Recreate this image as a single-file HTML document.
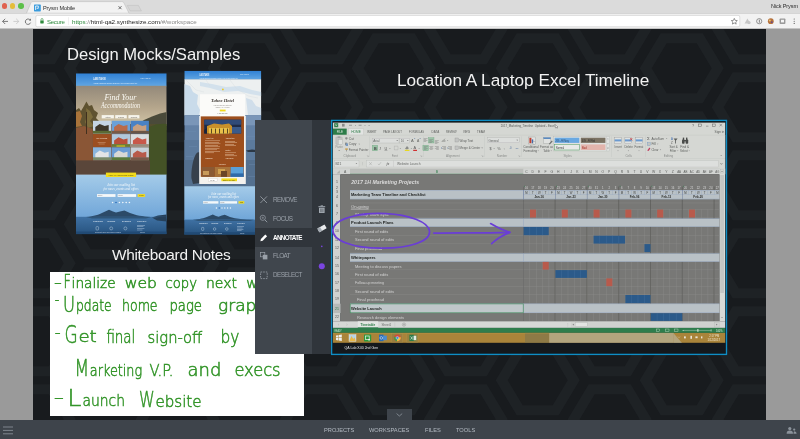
<!DOCTYPE html>
<html><head><meta charset="utf-8"><title>Prysm Mobile</title>
<style>
*{margin:0;padding:0;box-sizing:border-box}
html,body{width:800px;height:439px;overflow:hidden;background:#9a9a9a;font-family:"Liberation Sans",sans-serif}
.a{position:absolute}
#stage{position:absolute;left:0;top:0;width:800px;height:439px;overflow:hidden}
.t{position:absolute;white-space:nowrap;line-height:1;will-change:transform}
svg{will-change:transform}
</style></head><body><div id="stage">

<div class="a" id="ws" style="left:33px;top:29px;width:733px;height:391px;background:#181b1e;overflow:hidden">
<svg class="a" style="left:0;top:0" width="733" height="391" viewBox="33 29 733 391"><path fill="#1e2225" fill-rule="evenodd" d="M3.7 -9.8 L-17.3 25.2 L-59.3 25.2 L-80.3 -9.8 L-59.3 -44.8 L-17.3 -44.8 Z M-8.3 -9.8 L-23.3 15.2 L-53.3 15.2 L-68.3 -9.8 L-53.3 -34.8 L-23.3 -34.8 Z M3.7 68.2 L-17.3 103.2 L-59.3 103.2 L-80.3 68.2 L-59.3 33.2 L-17.3 33.2 Z M-8.3 68.2 L-23.3 93.2 L-53.3 93.2 L-68.3 68.2 L-53.3 43.2 L-23.3 43.2 Z M3.7 146.2 L-17.3 181.2 L-59.3 181.2 L-80.3 146.2 L-59.3 111.2 L-17.3 111.2 Z M-8.3 146.2 L-23.3 171.2 L-53.3 171.2 L-68.3 146.2 L-53.3 121.2 L-23.3 121.2 Z M3.7 224.2 L-17.3 259.2 L-59.3 259.2 L-80.3 224.2 L-59.3 189.2 L-17.3 189.2 Z M-8.3 224.2 L-23.3 249.2 L-53.3 249.2 L-68.3 224.2 L-53.3 199.2 L-23.3 199.2 Z M3.7 302.2 L-17.3 337.2 L-59.3 337.2 L-80.3 302.2 L-59.3 267.2 L-17.3 267.2 Z M-8.3 302.2 L-23.3 327.2 L-53.3 327.2 L-68.3 302.2 L-53.3 277.2 L-23.3 277.2 Z M3.7 380.2 L-17.3 415.2 L-59.3 415.2 L-80.3 380.2 L-59.3 345.2 L-17.3 345.2 Z M-8.3 380.2 L-23.3 405.2 L-53.3 405.2 L-68.3 380.2 L-53.3 355.2 L-23.3 355.2 Z M3.7 458.2 L-17.3 493.2 L-59.3 493.2 L-80.3 458.2 L-59.3 423.2 L-17.3 423.2 Z M-8.3 458.2 L-23.3 483.2 L-53.3 483.2 L-68.3 458.2 L-53.3 433.2 L-23.3 433.2 Z M75.7 -48.8 L54.7 -13.8 L12.7 -13.8 L-8.3 -48.8 L12.7 -83.8 L54.7 -83.8 Z M63.7 -48.8 L48.7 -23.8 L18.7 -23.8 L3.7 -48.8 L18.7 -73.8 L48.7 -73.8 Z M75.7 29.2 L54.7 64.2 L12.7 64.2 L-8.3 29.2 L12.7 -5.8 L54.7 -5.8 Z M63.7 29.2 L48.7 54.2 L18.7 54.2 L3.7 29.2 L18.7 4.2 L48.7 4.2 Z M75.7 107.2 L54.7 142.2 L12.7 142.2 L-8.3 107.2 L12.7 72.2 L54.7 72.2 Z M63.7 107.2 L48.7 132.2 L18.7 132.2 L3.7 107.2 L18.7 82.2 L48.7 82.2 Z M75.7 185.2 L54.7 220.2 L12.7 220.2 L-8.3 185.2 L12.7 150.2 L54.7 150.2 Z M63.7 185.2 L48.7 210.2 L18.7 210.2 L3.7 185.2 L18.7 160.2 L48.7 160.2 Z M75.7 263.2 L54.7 298.2 L12.7 298.2 L-8.3 263.2 L12.7 228.2 L54.7 228.2 Z M63.7 263.2 L48.7 288.2 L18.7 288.2 L3.7 263.2 L18.7 238.2 L48.7 238.2 Z M75.7 341.2 L54.7 376.2 L12.7 376.2 L-8.3 341.2 L12.7 306.2 L54.7 306.2 Z M63.7 341.2 L48.7 366.2 L18.7 366.2 L3.7 341.2 L18.7 316.2 L48.7 316.2 Z M75.7 419.2 L54.7 454.2 L12.7 454.2 L-8.3 419.2 L12.7 384.2 L54.7 384.2 Z M63.7 419.2 L48.7 444.2 L18.7 444.2 L3.7 419.2 L18.7 394.2 L48.7 394.2 Z M147.7 -9.8 L126.7 25.2 L84.7 25.2 L63.7 -9.8 L84.7 -44.8 L126.7 -44.8 Z M135.7 -9.8 L120.7 15.2 L90.7 15.2 L75.7 -9.8 L90.7 -34.8 L120.7 -34.8 Z M147.7 68.2 L126.7 103.2 L84.7 103.2 L63.7 68.2 L84.7 33.2 L126.7 33.2 Z M135.7 68.2 L120.7 93.2 L90.7 93.2 L75.7 68.2 L90.7 43.2 L120.7 43.2 Z M147.7 146.2 L126.7 181.2 L84.7 181.2 L63.7 146.2 L84.7 111.2 L126.7 111.2 Z M135.7 146.2 L120.7 171.2 L90.7 171.2 L75.7 146.2 L90.7 121.2 L120.7 121.2 Z M147.7 224.2 L126.7 259.2 L84.7 259.2 L63.7 224.2 L84.7 189.2 L126.7 189.2 Z M135.7 224.2 L120.7 249.2 L90.7 249.2 L75.7 224.2 L90.7 199.2 L120.7 199.2 Z M147.7 302.2 L126.7 337.2 L84.7 337.2 L63.7 302.2 L84.7 267.2 L126.7 267.2 Z M135.7 302.2 L120.7 327.2 L90.7 327.2 L75.7 302.2 L90.7 277.2 L120.7 277.2 Z M147.7 380.2 L126.7 415.2 L84.7 415.2 L63.7 380.2 L84.7 345.2 L126.7 345.2 Z M135.7 380.2 L120.7 405.2 L90.7 405.2 L75.7 380.2 L90.7 355.2 L120.7 355.2 Z M147.7 458.2 L126.7 493.2 L84.7 493.2 L63.7 458.2 L84.7 423.2 L126.7 423.2 Z M135.7 458.2 L120.7 483.2 L90.7 483.2 L75.7 458.2 L90.7 433.2 L120.7 433.2 Z M219.7 -48.8 L198.7 -13.8 L156.7 -13.8 L135.7 -48.8 L156.7 -83.8 L198.7 -83.8 Z M207.7 -48.8 L192.7 -23.8 L162.7 -23.8 L147.7 -48.8 L162.7 -73.8 L192.7 -73.8 Z M219.7 29.2 L198.7 64.2 L156.7 64.2 L135.7 29.2 L156.7 -5.8 L198.7 -5.8 Z M207.7 29.2 L192.7 54.2 L162.7 54.2 L147.7 29.2 L162.7 4.2 L192.7 4.2 Z M219.7 107.2 L198.7 142.2 L156.7 142.2 L135.7 107.2 L156.7 72.2 L198.7 72.2 Z M207.7 107.2 L192.7 132.2 L162.7 132.2 L147.7 107.2 L162.7 82.2 L192.7 82.2 Z M219.7 185.2 L198.7 220.2 L156.7 220.2 L135.7 185.2 L156.7 150.2 L198.7 150.2 Z M207.7 185.2 L192.7 210.2 L162.7 210.2 L147.7 185.2 L162.7 160.2 L192.7 160.2 Z M219.7 263.2 L198.7 298.2 L156.7 298.2 L135.7 263.2 L156.7 228.2 L198.7 228.2 Z M207.7 263.2 L192.7 288.2 L162.7 288.2 L147.7 263.2 L162.7 238.2 L192.7 238.2 Z M219.7 341.2 L198.7 376.2 L156.7 376.2 L135.7 341.2 L156.7 306.2 L198.7 306.2 Z M207.7 341.2 L192.7 366.2 L162.7 366.2 L147.7 341.2 L162.7 316.2 L192.7 316.2 Z M219.7 419.2 L198.7 454.2 L156.7 454.2 L135.7 419.2 L156.7 384.2 L198.7 384.2 Z M207.7 419.2 L192.7 444.2 L162.7 444.2 L147.7 419.2 L162.7 394.2 L192.7 394.2 Z M291.7 -9.8 L270.7 25.2 L228.7 25.2 L207.7 -9.8 L228.7 -44.8 L270.7 -44.8 Z M279.7 -9.8 L264.7 15.2 L234.7 15.2 L219.7 -9.8 L234.7 -34.8 L264.7 -34.8 Z M291.7 68.2 L270.7 103.2 L228.7 103.2 L207.7 68.2 L228.7 33.2 L270.7 33.2 Z M279.7 68.2 L264.7 93.2 L234.7 93.2 L219.7 68.2 L234.7 43.2 L264.7 43.2 Z M291.7 146.2 L270.7 181.2 L228.7 181.2 L207.7 146.2 L228.7 111.2 L270.7 111.2 Z M279.7 146.2 L264.7 171.2 L234.7 171.2 L219.7 146.2 L234.7 121.2 L264.7 121.2 Z M291.7 224.2 L270.7 259.2 L228.7 259.2 L207.7 224.2 L228.7 189.2 L270.7 189.2 Z M279.7 224.2 L264.7 249.2 L234.7 249.2 L219.7 224.2 L234.7 199.2 L264.7 199.2 Z M291.7 302.2 L270.7 337.2 L228.7 337.2 L207.7 302.2 L228.7 267.2 L270.7 267.2 Z M279.7 302.2 L264.7 327.2 L234.7 327.2 L219.7 302.2 L234.7 277.2 L264.7 277.2 Z M291.7 380.2 L270.7 415.2 L228.7 415.2 L207.7 380.2 L228.7 345.2 L270.7 345.2 Z M279.7 380.2 L264.7 405.2 L234.7 405.2 L219.7 380.2 L234.7 355.2 L264.7 355.2 Z M291.7 458.2 L270.7 493.2 L228.7 493.2 L207.7 458.2 L228.7 423.2 L270.7 423.2 Z M279.7 458.2 L264.7 483.2 L234.7 483.2 L219.7 458.2 L234.7 433.2 L264.7 433.2 Z M363.7 -48.8 L342.7 -13.8 L300.7 -13.8 L279.7 -48.8 L300.7 -83.8 L342.7 -83.8 Z M351.7 -48.8 L336.7 -23.8 L306.7 -23.8 L291.7 -48.8 L306.7 -73.8 L336.7 -73.8 Z M363.7 29.2 L342.7 64.2 L300.7 64.2 L279.7 29.2 L300.7 -5.8 L342.7 -5.8 Z M351.7 29.2 L336.7 54.2 L306.7 54.2 L291.7 29.2 L306.7 4.2 L336.7 4.2 Z M363.7 107.2 L342.7 142.2 L300.7 142.2 L279.7 107.2 L300.7 72.2 L342.7 72.2 Z M351.7 107.2 L336.7 132.2 L306.7 132.2 L291.7 107.2 L306.7 82.2 L336.7 82.2 Z M363.7 185.2 L342.7 220.2 L300.7 220.2 L279.7 185.2 L300.7 150.2 L342.7 150.2 Z M351.7 185.2 L336.7 210.2 L306.7 210.2 L291.7 185.2 L306.7 160.2 L336.7 160.2 Z M363.7 263.2 L342.7 298.2 L300.7 298.2 L279.7 263.2 L300.7 228.2 L342.7 228.2 Z M351.7 263.2 L336.7 288.2 L306.7 288.2 L291.7 263.2 L306.7 238.2 L336.7 238.2 Z M363.7 341.2 L342.7 376.2 L300.7 376.2 L279.7 341.2 L300.7 306.2 L342.7 306.2 Z M351.7 341.2 L336.7 366.2 L306.7 366.2 L291.7 341.2 L306.7 316.2 L336.7 316.2 Z M363.7 419.2 L342.7 454.2 L300.7 454.2 L279.7 419.2 L300.7 384.2 L342.7 384.2 Z M351.7 419.2 L336.7 444.2 L306.7 444.2 L291.7 419.2 L306.7 394.2 L336.7 394.2 Z M435.7 -9.8 L414.7 25.2 L372.7 25.2 L351.7 -9.8 L372.7 -44.8 L414.7 -44.8 Z M423.7 -9.8 L408.7 15.2 L378.7 15.2 L363.7 -9.8 L378.7 -34.8 L408.7 -34.8 Z M435.7 68.2 L414.7 103.2 L372.7 103.2 L351.7 68.2 L372.7 33.2 L414.7 33.2 Z M423.7 68.2 L408.7 93.2 L378.7 93.2 L363.7 68.2 L378.7 43.2 L408.7 43.2 Z M435.7 146.2 L414.7 181.2 L372.7 181.2 L351.7 146.2 L372.7 111.2 L414.7 111.2 Z M423.7 146.2 L408.7 171.2 L378.7 171.2 L363.7 146.2 L378.7 121.2 L408.7 121.2 Z M435.7 224.2 L414.7 259.2 L372.7 259.2 L351.7 224.2 L372.7 189.2 L414.7 189.2 Z M423.7 224.2 L408.7 249.2 L378.7 249.2 L363.7 224.2 L378.7 199.2 L408.7 199.2 Z M435.7 302.2 L414.7 337.2 L372.7 337.2 L351.7 302.2 L372.7 267.2 L414.7 267.2 Z M423.7 302.2 L408.7 327.2 L378.7 327.2 L363.7 302.2 L378.7 277.2 L408.7 277.2 Z M435.7 380.2 L414.7 415.2 L372.7 415.2 L351.7 380.2 L372.7 345.2 L414.7 345.2 Z M423.7 380.2 L408.7 405.2 L378.7 405.2 L363.7 380.2 L378.7 355.2 L408.7 355.2 Z M435.7 458.2 L414.7 493.2 L372.7 493.2 L351.7 458.2 L372.7 423.2 L414.7 423.2 Z M423.7 458.2 L408.7 483.2 L378.7 483.2 L363.7 458.2 L378.7 433.2 L408.7 433.2 Z M507.7 -48.8 L486.7 -13.8 L444.7 -13.8 L423.7 -48.8 L444.7 -83.8 L486.7 -83.8 Z M495.7 -48.8 L480.7 -23.8 L450.7 -23.8 L435.7 -48.8 L450.7 -73.8 L480.7 -73.8 Z M507.7 29.2 L486.7 64.2 L444.7 64.2 L423.7 29.2 L444.7 -5.8 L486.7 -5.8 Z M495.7 29.2 L480.7 54.2 L450.7 54.2 L435.7 29.2 L450.7 4.2 L480.7 4.2 Z M507.7 107.2 L486.7 142.2 L444.7 142.2 L423.7 107.2 L444.7 72.2 L486.7 72.2 Z M495.7 107.2 L480.7 132.2 L450.7 132.2 L435.7 107.2 L450.7 82.2 L480.7 82.2 Z M507.7 185.2 L486.7 220.2 L444.7 220.2 L423.7 185.2 L444.7 150.2 L486.7 150.2 Z M495.7 185.2 L480.7 210.2 L450.7 210.2 L435.7 185.2 L450.7 160.2 L480.7 160.2 Z M507.7 263.2 L486.7 298.2 L444.7 298.2 L423.7 263.2 L444.7 228.2 L486.7 228.2 Z M495.7 263.2 L480.7 288.2 L450.7 288.2 L435.7 263.2 L450.7 238.2 L480.7 238.2 Z M507.7 341.2 L486.7 376.2 L444.7 376.2 L423.7 341.2 L444.7 306.2 L486.7 306.2 Z M495.7 341.2 L480.7 366.2 L450.7 366.2 L435.7 341.2 L450.7 316.2 L480.7 316.2 Z M507.7 419.2 L486.7 454.2 L444.7 454.2 L423.7 419.2 L444.7 384.2 L486.7 384.2 Z M495.7 419.2 L480.7 444.2 L450.7 444.2 L435.7 419.2 L450.7 394.2 L480.7 394.2 Z M579.7 -9.8 L558.7 25.2 L516.7 25.2 L495.7 -9.8 L516.7 -44.8 L558.7 -44.8 Z M567.7 -9.8 L552.7 15.2 L522.7 15.2 L507.7 -9.8 L522.7 -34.8 L552.7 -34.8 Z M579.7 68.2 L558.7 103.2 L516.7 103.2 L495.7 68.2 L516.7 33.2 L558.7 33.2 Z M567.7 68.2 L552.7 93.2 L522.7 93.2 L507.7 68.2 L522.7 43.2 L552.7 43.2 Z M579.7 146.2 L558.7 181.2 L516.7 181.2 L495.7 146.2 L516.7 111.2 L558.7 111.2 Z M567.7 146.2 L552.7 171.2 L522.7 171.2 L507.7 146.2 L522.7 121.2 L552.7 121.2 Z M579.7 224.2 L558.7 259.2 L516.7 259.2 L495.7 224.2 L516.7 189.2 L558.7 189.2 Z M567.7 224.2 L552.7 249.2 L522.7 249.2 L507.7 224.2 L522.7 199.2 L552.7 199.2 Z M579.7 302.2 L558.7 337.2 L516.7 337.2 L495.7 302.2 L516.7 267.2 L558.7 267.2 Z M567.7 302.2 L552.7 327.2 L522.7 327.2 L507.7 302.2 L522.7 277.2 L552.7 277.2 Z M579.7 380.2 L558.7 415.2 L516.7 415.2 L495.7 380.2 L516.7 345.2 L558.7 345.2 Z M567.7 380.2 L552.7 405.2 L522.7 405.2 L507.7 380.2 L522.7 355.2 L552.7 355.2 Z M579.7 458.2 L558.7 493.2 L516.7 493.2 L495.7 458.2 L516.7 423.2 L558.7 423.2 Z M567.7 458.2 L552.7 483.2 L522.7 483.2 L507.7 458.2 L522.7 433.2 L552.7 433.2 Z M651.7 -48.8 L630.7 -13.8 L588.7 -13.8 L567.7 -48.8 L588.7 -83.8 L630.7 -83.8 Z M639.7 -48.8 L624.7 -23.8 L594.7 -23.8 L579.7 -48.8 L594.7 -73.8 L624.7 -73.8 Z M651.7 29.2 L630.7 64.2 L588.7 64.2 L567.7 29.2 L588.7 -5.8 L630.7 -5.8 Z M639.7 29.2 L624.7 54.2 L594.7 54.2 L579.7 29.2 L594.7 4.2 L624.7 4.2 Z M651.7 107.2 L630.7 142.2 L588.7 142.2 L567.7 107.2 L588.7 72.2 L630.7 72.2 Z M639.7 107.2 L624.7 132.2 L594.7 132.2 L579.7 107.2 L594.7 82.2 L624.7 82.2 Z M651.7 185.2 L630.7 220.2 L588.7 220.2 L567.7 185.2 L588.7 150.2 L630.7 150.2 Z M639.7 185.2 L624.7 210.2 L594.7 210.2 L579.7 185.2 L594.7 160.2 L624.7 160.2 Z M651.7 263.2 L630.7 298.2 L588.7 298.2 L567.7 263.2 L588.7 228.2 L630.7 228.2 Z M639.7 263.2 L624.7 288.2 L594.7 288.2 L579.7 263.2 L594.7 238.2 L624.7 238.2 Z M651.7 341.2 L630.7 376.2 L588.7 376.2 L567.7 341.2 L588.7 306.2 L630.7 306.2 Z M639.7 341.2 L624.7 366.2 L594.7 366.2 L579.7 341.2 L594.7 316.2 L624.7 316.2 Z M651.7 419.2 L630.7 454.2 L588.7 454.2 L567.7 419.2 L588.7 384.2 L630.7 384.2 Z M639.7 419.2 L624.7 444.2 L594.7 444.2 L579.7 419.2 L594.7 394.2 L624.7 394.2 Z M723.7 -9.8 L702.7 25.2 L660.7 25.2 L639.7 -9.8 L660.7 -44.8 L702.7 -44.8 Z M711.7 -9.8 L696.7 15.2 L666.7 15.2 L651.7 -9.8 L666.7 -34.8 L696.7 -34.8 Z M723.7 68.2 L702.7 103.2 L660.7 103.2 L639.7 68.2 L660.7 33.2 L702.7 33.2 Z M711.7 68.2 L696.7 93.2 L666.7 93.2 L651.7 68.2 L666.7 43.2 L696.7 43.2 Z M723.7 146.2 L702.7 181.2 L660.7 181.2 L639.7 146.2 L660.7 111.2 L702.7 111.2 Z M711.7 146.2 L696.7 171.2 L666.7 171.2 L651.7 146.2 L666.7 121.2 L696.7 121.2 Z M723.7 224.2 L702.7 259.2 L660.7 259.2 L639.7 224.2 L660.7 189.2 L702.7 189.2 Z M711.7 224.2 L696.7 249.2 L666.7 249.2 L651.7 224.2 L666.7 199.2 L696.7 199.2 Z M723.7 302.2 L702.7 337.2 L660.7 337.2 L639.7 302.2 L660.7 267.2 L702.7 267.2 Z M711.7 302.2 L696.7 327.2 L666.7 327.2 L651.7 302.2 L666.7 277.2 L696.7 277.2 Z M723.7 380.2 L702.7 415.2 L660.7 415.2 L639.7 380.2 L660.7 345.2 L702.7 345.2 Z M711.7 380.2 L696.7 405.2 L666.7 405.2 L651.7 380.2 L666.7 355.2 L696.7 355.2 Z M723.7 458.2 L702.7 493.2 L660.7 493.2 L639.7 458.2 L660.7 423.2 L702.7 423.2 Z M711.7 458.2 L696.7 483.2 L666.7 483.2 L651.7 458.2 L666.7 433.2 L696.7 433.2 Z M795.7 -48.8 L774.7 -13.8 L732.7 -13.8 L711.7 -48.8 L732.7 -83.8 L774.7 -83.8 Z M783.7 -48.8 L768.7 -23.8 L738.7 -23.8 L723.7 -48.8 L738.7 -73.8 L768.7 -73.8 Z M795.7 29.2 L774.7 64.2 L732.7 64.2 L711.7 29.2 L732.7 -5.8 L774.7 -5.8 Z M783.7 29.2 L768.7 54.2 L738.7 54.2 L723.7 29.2 L738.7 4.2 L768.7 4.2 Z M795.7 107.2 L774.7 142.2 L732.7 142.2 L711.7 107.2 L732.7 72.2 L774.7 72.2 Z M783.7 107.2 L768.7 132.2 L738.7 132.2 L723.7 107.2 L738.7 82.2 L768.7 82.2 Z M795.7 185.2 L774.7 220.2 L732.7 220.2 L711.7 185.2 L732.7 150.2 L774.7 150.2 Z M783.7 185.2 L768.7 210.2 L738.7 210.2 L723.7 185.2 L738.7 160.2 L768.7 160.2 Z M795.7 263.2 L774.7 298.2 L732.7 298.2 L711.7 263.2 L732.7 228.2 L774.7 228.2 Z M783.7 263.2 L768.7 288.2 L738.7 288.2 L723.7 263.2 L738.7 238.2 L768.7 238.2 Z M795.7 341.2 L774.7 376.2 L732.7 376.2 L711.7 341.2 L732.7 306.2 L774.7 306.2 Z M783.7 341.2 L768.7 366.2 L738.7 366.2 L723.7 341.2 L738.7 316.2 L768.7 316.2 Z M795.7 419.2 L774.7 454.2 L732.7 454.2 L711.7 419.2 L732.7 384.2 L774.7 384.2 Z M783.7 419.2 L768.7 444.2 L738.7 444.2 L723.7 419.2 L738.7 394.2 L768.7 394.2 Z M867.7 -9.8 L846.7 25.2 L804.7 25.2 L783.7 -9.8 L804.7 -44.8 L846.7 -44.8 Z M855.7 -9.8 L840.7 15.2 L810.7 15.2 L795.7 -9.8 L810.7 -34.8 L840.7 -34.8 Z M867.7 68.2 L846.7 103.2 L804.7 103.2 L783.7 68.2 L804.7 33.2 L846.7 33.2 Z M855.7 68.2 L840.7 93.2 L810.7 93.2 L795.7 68.2 L810.7 43.2 L840.7 43.2 Z M867.7 146.2 L846.7 181.2 L804.7 181.2 L783.7 146.2 L804.7 111.2 L846.7 111.2 Z M855.7 146.2 L840.7 171.2 L810.7 171.2 L795.7 146.2 L810.7 121.2 L840.7 121.2 Z M867.7 224.2 L846.7 259.2 L804.7 259.2 L783.7 224.2 L804.7 189.2 L846.7 189.2 Z M855.7 224.2 L840.7 249.2 L810.7 249.2 L795.7 224.2 L810.7 199.2 L840.7 199.2 Z M867.7 302.2 L846.7 337.2 L804.7 337.2 L783.7 302.2 L804.7 267.2 L846.7 267.2 Z M855.7 302.2 L840.7 327.2 L810.7 327.2 L795.7 302.2 L810.7 277.2 L840.7 277.2 Z M867.7 380.2 L846.7 415.2 L804.7 415.2 L783.7 380.2 L804.7 345.2 L846.7 345.2 Z M855.7 380.2 L840.7 405.2 L810.7 405.2 L795.7 380.2 L810.7 355.2 L840.7 355.2 Z M867.7 458.2 L846.7 493.2 L804.7 493.2 L783.7 458.2 L804.7 423.2 L846.7 423.2 Z M855.7 458.2 L840.7 483.2 L810.7 483.2 L795.7 458.2 L810.7 433.2 L840.7 433.2 Z"/></svg>
</div>
<div class="t" id="t1" style="left:66.8px;top:46.8px;font-size:16.6px;color:#f2f2f2">Design Mocks/Samples</div>
<div class="t" id="t2" style="left:111.6px;top:247.4px;font-size:15.4px;letter-spacing:-0.3px;color:#f2f2f2">Whiteboard Notes</div>
<div class="t" id="t3" style="left:397px;top:71.6px;font-size:17.2px;color:#f2f2f2">Location A Laptop Excel Timeline</div>
<svg class="a" style="left:75px;top:70px" width="190" height="166" viewBox="75 70 190 166" font-family="'Liberation Sans',sans-serif">
<defs>
<linearGradient id="hd1" x1="0" y1="0" x2="0" y2="1"><stop offset="0" stop-color="#2f80d4"/><stop offset="1" stop-color="#62a6e2"/></linearGradient>
<linearGradient id="sky1" x1="0" y1="0" x2="0" y2="1"><stop offset="0" stop-color="#93897a"/><stop offset="0.55" stop-color="#b5a68c"/><stop offset="1" stop-color="#d2c6a8"/></linearGradient>
<linearGradient id="lb1" x1="0" y1="0" x2="0" y2="1"><stop offset="0" stop-color="#a4cbe9"/><stop offset="1" stop-color="#6fa5d8"/></linearGradient>
<linearGradient id="ft1" x1="0" y1="0" x2="0" y2="1"><stop offset="0" stop-color="#3f71a3"/><stop offset="1" stop-color="#27537f"/></linearGradient>
<linearGradient id="gr1" x1="0" y1="0" x2="1" y2="0"><stop offset="0" stop-color="#8a5636"/><stop offset="0.55" stop-color="#6a4a36"/><stop offset="1" stop-color="#46502a"/></linearGradient>
<clipPath id="c1"><rect x="76" y="73.3" width="90.7" height="160.9"/></clipPath>
<clipPath id="c2"><rect x="184.3" y="70.7" width="77" height="163.8"/></clipPath>
</defs>
<g clip-path="url(#c1)">
<rect x="76" y="73.3" width="90.7" height="13" fill="url(#hd1)"/>
<rect x="76" y="85.8" width="90.7" height="40" fill="url(#sky1)"/>
<path d="M134 127 L144 120 L152 116.4 L160 113.4 L166.7 112 V130 H134 Z" fill="#4a4a3a"/>
<rect x="76" y="124" width="90.7" height="51" fill="url(#gr1)"/>
<path d="M149 127 Q158 123 166.7 124 V175 H149 Z" fill="#445226"/>
<path d="M76 110 L79 108 L81 111 L84 106 L86.4 101.6 L89 106 L92 105 L94 110 L98 113 L96 118 L100 122 L97 127 L99 131 L94 133 L90 130 L87 135 L83 131 L79 133 L76 131 Z" fill="#5f5230"/>
<path d="M76 112 L80 111 L82 116 L80 122 L82 126 L76 127 Z" fill="#a8733a"/>
<path d="M86 108 L90 111 L93 117 L90 121 L94 126 L88 128 L85 122 L87 116 Z" fill="#7c6c3c"/>
<path d="M76 128 L84 126 L92.6 129 L92.6 162 L76 162 Z" fill="#8a5636"/>
<rect x="76" y="160.4" width="74" height="14.4" fill="#5a463a"/>
<rect x="86" y="112" width="0.9" height="22" fill="#3a2c1c"/>
<text x="93.2" y="80.2" font-size="4.2" fill="#f2f6fa" font-weight="bold" textLength="12.6" lengthAdjust="spacingAndGlyphs">LAKE TAHOE</text>
<text x="140.6" y="79.4" font-size="2" fill="#e4eef8" textLength="10" lengthAdjust="spacingAndGlyphs">Log in | Sign up</text>
<text x="93.2" y="84.2" font-size="2" fill="#dcebf8" textLength="44" lengthAdjust="spacingAndGlyphs">HOME  LODGING  DINING  EVENTS  ACTIVITIES  CONTACT</text>
<g font-family="'Liberation Serif',serif" font-style="italic" fill="#fbfaf4" text-anchor="middle">
<text x="120.4" y="99.6" font-size="8.4" textLength="32" lengthAdjust="spacingAndGlyphs">Find Your</text>
<text x="120.4" y="108" font-size="7.6" textLength="39" lengthAdjust="spacingAndGlyphs">Accommodation</text></g>
<rect x="101.7" y="115.1" width="12.2" height="3.3" fill="#f6f4ec"/>
<rect x="115.2" y="115.1" width="11.6" height="3.3" fill="#f6f4ec"/>
<rect x="128.4" y="115.1" width="11.0" height="3.3" fill="#f6f4ec"/>
<g font-size="1.9" fill="#6a6458" text-anchor="middle"><text x="107.8" y="117.5">Hotels</text><text x="121" y="117.5">Cabins</text><text x="133.9" y="117.5">Resorts</text></g>
<rect x="93.0" y="120.8" width="18.3" height="12.8" fill="#c4d4e4"/>
<path d="M95.3 131.2 L95.3 127.1 L99.7 123.9 L104.7 126.1 L108.7 125.1 L108.7 131.2 Z" fill="#3c362a"/>
<rect x="93.0" y="130.8" width="18.3" height="2.8" fill="#5a6a34"/>
<rect x="111.8" y="120.8" width="18.3" height="12.8" fill="#6aa0d8"/>
<path d="M114.1 131.2 L114.1 127.1 L118.5 123.9 L123.5 126.1 L127.5 125.1 L127.5 131.2 Z" fill="#b86a4a"/>
<rect x="111.8" y="130.8" width="18.3" height="2.8" fill="#7a5a44"/>
<rect x="130.6" y="120.8" width="18.3" height="12.8" fill="#4a82c4"/>
<path d="M132.9 131.2 L132.9 127.1 L137.3 123.9 L142.3 126.1 L146.3 125.1 L146.3 131.2 Z" fill="#c8a080"/>
<rect x="130.6" y="130.8" width="18.3" height="2.8" fill="#6a5446"/>
<rect x="93.0" y="134.1" width="18.3" height="12.8" fill="#9c4e20"/>
<text x="96.3" y="139.2" font-size="2.4" fill="#f6e8d8" font-style="italic" font-family="'Liberation Serif',serif" textLength="11" lengthAdjust="spacingAndGlyphs">Our welcome</text>
<rect x="97.7" y="142.2" width="8" height="0.4" fill="#e0b898"/><rect x="98.7" y="143.8" width="6" height="0.4" fill="#e0b898"/>
<rect x="111.8" y="134.1" width="18.3" height="12.8" fill="#b0c8dc"/>
<path d="M114.1 144.5 L114.1 140.4 L118.5 137.2 L123.5 139.4 L127.5 138.4 L127.5 144.5 Z" fill="#b8503a"/>
<rect x="111.8" y="144.1" width="18.3" height="2.8" fill="#6a7a34"/>
<rect x="130.6" y="134.1" width="18.3" height="12.8" fill="#d8dce0"/>
<path d="M132.9 144.5 L132.9 140.4 L137.3 137.2 L142.3 139.4 L146.3 138.4 L146.3 144.5 Z" fill="#c8584a"/>
<rect x="130.6" y="144.1" width="18.3" height="2.8" fill="#9a8a7a"/>
<rect x="93.0" y="147.3" width="18.3" height="12.8" fill="#8ab4dc"/>
<path d="M95.3 157.8 L95.3 153.7 L99.7 150.5 L104.7 152.7 L108.7 151.7 L108.7 157.8 Z" fill="#e2e4e6"/>
<rect x="93.0" y="157.3" width="18.3" height="2.8" fill="#7a8a6a"/>
<rect x="111.8" y="147.3" width="18.3" height="12.8" fill="#6a9cd4"/>
<path d="M114.1 157.8 L114.1 153.7 L118.5 150.5 L123.5 152.7 L127.5 151.7 L127.5 157.8 Z" fill="#d8d8d4"/>
<rect x="111.8" y="157.3" width="18.3" height="2.8" fill="#5a7a3a"/>
<rect x="130.6" y="147.3" width="18.3" height="12.8" fill="#c8d0d8"/>
<path d="M132.9 157.8 L132.9 153.7 L137.3 150.5 L142.3 152.7 L146.3 151.7 L146.3 157.8 Z" fill="#b85a4a"/>
<rect x="130.6" y="157.3" width="18.3" height="2.8" fill="#7a5a4a"/>
<rect x="116.5" y="145.5" width="8.6" height="1" fill="#e8d020"/>
<rect x="76" y="174.6" width="90.7" height="44" fill="url(#lb1)"/>
<rect x="105.9" y="172.6" width="30.2" height="4.4" fill="#f1da1c"/>
<text x="121" y="175.9" font-size="2.4" fill="#5a5210" text-anchor="middle" textLength="25" lengthAdjust="spacingAndGlyphs">VIEW ALL ACCOMMODATIONS</text>
<g font-family="'Liberation Serif',serif" font-style="italic" fill="#f6fafc" text-anchor="middle" font-size="4">
<text x="121" y="186.2" textLength="28" lengthAdjust="spacingAndGlyphs">Join our mailing list</text>
<text x="121" y="190.4" textLength="35" lengthAdjust="spacingAndGlyphs">for news, events and offers</text></g>
<rect x="97" y="194.1" width="18.5" height="2.8" fill="#f4f8fa"/><rect x="117.6" y="194.1" width="18.5" height="2.8" fill="#f4f8fa"/><rect x="137.7" y="194.1" width="7.4" height="2.8" fill="#f1da1c"/>
<text x="97.8" y="196.3" font-size="1.8" fill="#8a8a8a">Name</text><text x="118.4" y="196.3" font-size="1.8" fill="#8a8a8a">Email</text><text x="141.4" y="196.3" font-size="1.8" fill="#5a5210" text-anchor="middle">JOIN</text>
<circle cx="112.6" cy="202.5" r="0.8" fill="#f0f6fa"/>
<circle cx="116.0" cy="202.5" r="0.8" fill="#2a6ab8"/>
<circle cx="119.4" cy="202.5" r="0.8" fill="#f0f6fa"/>
<circle cx="122.8" cy="202.5" r="0.8" fill="#f0f6fa"/>
<circle cx="126.2" cy="202.5" r="0.8" fill="#f0f6fa"/>
<circle cx="129.4" cy="202.5" r="0.8" fill="#f0f6fa"/>
<path d="M86 217 C94 216 99 214.6 103 212.4 L109 209.8 L113 211.6 L116 212.6 L120 211.4 L124.4 210.4 L130 213 C136 215.4 142 216.4 151 217 Z" fill="#2c4a68"/>
<path d="M152 217.6 L158 215.4 L166.7 214.4 V221 L156 220 Z" fill="#26405a"/>
<rect x="76" y="216.8" width="90.7" height="17.5" fill="url(#ft1)"/>
<path d="M86 217 C100 216.6 140 216.6 151 217 L146 218.4 L92 218.4 Z" fill="#2f5578"/>
<path d="M152 217.4 L166.7 216.6 V221.4 L157 220.4 Z" fill="#26405a"/>
<g font-size="2.2" fill="#e6eef6"><text x="93" y="222" textLength="10" lengthAdjust="spacingAndGlyphs">LODGING</text><text x="107.4" y="222" textLength="8" lengthAdjust="spacingAndGlyphs">DINING</text><text x="122" y="222" textLength="9" lengthAdjust="spacingAndGlyphs">EVENTS</text><text x="137" y="222" textLength="9.4" lengthAdjust="spacingAndGlyphs">FOLLOW</text></g>
<g fill="none" stroke="#d4e2f0" stroke-width="0.4"><rect x="96" y="226.6" width="2.6" height="3.4" rx="0.8"/><circle cx="111.2" cy="228.4" r="1.5"/><circle cx="125.4" cy="228.4" r="1.5"/></g>
<g fill="#c4d6ea"><rect x="137" y="225" width="8" height="0.4"/><rect x="137" y="226.6" width="6.4" height="0.4"/><rect x="137" y="228.2" width="7.4" height="0.4"/><rect x="137" y="229.8" width="5.4" height="0.4"/></g>
<rect x="76" y="231.6" width="90.7" height="2.7" fill="#214a74"/>
<text x="95" y="233.4" font-size="1.5" fill="#c4d6ea" textLength="26" lengthAdjust="spacingAndGlyphs">Copyright 2017 Lake Tahoe Lodging</text><text x="140" y="233.4" font-size="1.5" fill="#c4d6ea">Privacy</text>
</g>
<g clip-path="url(#c2)">
<rect x="184.3" y="70.7" width="77" height="9" fill="url(#hd1)"/>
<text x="199.6" y="76.4" font-size="3.4" fill="#f2f6fa" font-weight="bold" textLength="9.6" lengthAdjust="spacingAndGlyphs">LAKE TAHOE</text>
<text x="240" y="75.4" font-size="1.8" fill="#e4eef8" textLength="9" lengthAdjust="spacingAndGlyphs">Log in | Sign up</text>
<text x="199.6" y="78.8" font-size="1.6" fill="#dcebf8" textLength="38" lengthAdjust="spacingAndGlyphs">HOME  LODGING  DINING  EVENTS  ACTIVITIES  CONTACT</text>
<rect x="184.3" y="79.3" width="77" height="36.2" fill="#edf0f0"/>
<path d="M184.3 84 L190 86 L193 92 L198 95 L197 104 L200 110 L199 115.5 H184.3 Z" fill="#c9dbea"/>
<path d="M200 82 L212 84 L226 87 L240 86 L252 90 L261.3 92 V96 L250 94 L238 91 L224 92 L210 88 L200 86 Z" fill="#d3e1ec"/>
<path d="M246 98 L252 100 L256 106 L261.3 108 V115.5 H248 Z" fill="#d0deea"/>
<g stroke="#cfd5d8" stroke-width="0.3" fill="none"><path d="M186 80 L196 90 L204 92"/><path d="M230 80 L236 88 L248 96 L258 98"/><path d="M206 80 L210 86"/></g>
<circle cx="222.9" cy="89.4" r="0.9" fill="#f0c81c"/>
<rect x="184.3" y="115.3" width="77" height="71" fill="#6482a6"/>
<rect x="184.3" y="115.3" width="77" height="10" fill="#7a96b8"/>
<rect x="184.3" y="140" width="77" height="46.3" fill="#5c7a9c"/>
<rect x="184.3" y="160" width="77" height="26.3" fill="#54708f"/>
<path d="M191.4 178 C191 170 193 160 195 156 C196 152.6 198 151.6 199.6 152.4 V183 L193 184 Z" fill="#36404c"/>
<path d="M246 150.6 L252 149.4 L258 150.2 L256 152 L248 152 Z" fill="#2c3846"/>
<g fill="#6f8fb2" opacity="0.7"><rect x="186" y="131" width="10" height="0.5"/><rect x="189" y="146" width="8" height="0.5"/><rect x="247" y="136" width="11" height="0.5"/><rect x="249" y="164" width="9" height="0.5"/><rect x="186" y="156" width="7" height="0.5"/><rect x="248" y="176" width="10" height="0.5"/></g>
<rect x="200" y="94.2" width="45.2" height="23" fill="#fbfbf9"/>
<text x="222.6" y="101.8" font-size="4.6" fill="#3a3430" font-family="'Liberation Serif',serif" font-style="italic" font-weight="bold" text-anchor="middle" textLength="23" lengthAdjust="spacingAndGlyphs">Tahoe Hotel</text>
<text x="222.6" y="105.6" font-size="1.7" fill="#8a8680" text-anchor="middle" textLength="18" lengthAdjust="spacingAndGlyphs">4130 Lake Tahoe Blvd, South Lake</text>
<text x="222.6" y="107.8" font-size="1.7" fill="#8a8680" text-anchor="middle" textLength="14" lengthAdjust="spacingAndGlyphs">Tahoe, CA 96150</text>
<rect x="219.8" y="109.6" width="5.8" height="1.8" fill="#f1da1c"/>
<text x="222.6" y="114.2" font-size="1.7" fill="#6a6660" text-anchor="middle" textLength="10" lengthAdjust="spacingAndGlyphs">1 (530) 555-0134</text>
<rect x="199.2" y="116" width="46.6" height="68" fill="#f4f2ee"/>
<rect x="200.8" y="116.4" width="43.2" height="60.4" fill="#9d4f1d"/>
<rect x="204.2" y="119.7" width="37" height="13.8" fill="#1f2c48"/>
<rect x="204.2" y="119.7" width="37" height="5" fill="#2f4a78"/>
<path d="M207 133.5 V126 L214 123.6 L222 124.6 L229 123.4 L232 126 V133.5 Z" fill="#c8902a"/>
<path d="M209 133.5 V128 H229 V133.5 Z" fill="#e8c04a"/>
<g fill="#3a2a18"><rect x="211" y="128.6" width="0.8" height="4.9"/><rect x="215" y="128.6" width="0.8" height="4.9"/><rect x="219" y="128.6" width="0.8" height="4.9"/><rect x="223" y="128.6" width="0.8" height="4.9"/><rect x="227" y="128.6" width="0.8" height="4.9"/></g>
<rect x="232" y="127" width="9.2" height="6.5" fill="#3a5a8a"/>
<path d="M204.2 130 L207 128 V133.5 H204.2 Z" fill="#18223a"/>
<g fill="#e6c4a4">
<text x="205" y="138.6" font-size="2.4" fill="#f6e4d0" font-style="italic" font-family="'Liberation Serif',serif">About us</text>
<rect x="205" y="140.6" width="15.0" height="0.45"/>
<rect x="205" y="142.1" width="14.0" height="0.45"/>
<rect x="205" y="143.6" width="15.4" height="0.45"/>
<rect x="205" y="145.1" width="13.0" height="0.45"/>
<rect x="205" y="146.6" width="15.0" height="0.45"/>
<rect x="205" y="148.1" width="14.4" height="0.45"/>
<rect x="205" y="149.6" width="12.0" height="0.45"/>
<rect x="205" y="151.1" width="15.0" height="0.45"/>
<rect x="205" y="152.6" width="9.0" height="0.45"/>
<text x="225" y="138.6" font-size="2.4" fill="#f6e4d0" font-style="italic" font-family="'Liberation Serif',serif">Amenities</text>
<rect x="225" y="141.0" width="10.0" height="0.45"/>
<rect x="225" y="142.5" width="12.0" height="0.45"/>
<rect x="225" y="144.0" width="9.0" height="0.45"/>
<rect x="225" y="145.5" width="11.0" height="0.45"/>
<text x="225" y="150.6" font-size="2.4" fill="#f6e4d0" font-style="italic" font-family="'Liberation Serif',serif">Rates</text>
<rect x="225" y="152.6" width="11.0" height="0.45"/>
<rect x="225" y="154.1" width="9.0" height="0.45"/>
<rect x="225" y="155.6" width="12.0" height="0.45"/>
<text x="205" y="159" font-size="2.8" fill="#f6e4d0" font-style="italic" font-family="'Liberation Serif',serif">Rooms</text>
<text x="225.6" y="159" font-size="2.8" fill="#f6e4d0" font-style="italic" font-family="'Liberation Serif',serif">Dining</text>
<text x="222.4" y="164.8" font-size="2.4" fill="#f6e4d0" font-style="italic" font-family="'Liberation Serif',serif" text-anchor="middle">Gallery</text>
</g>
<rect x="201.6" y="167" width="13" height="9.8" fill="#8a5a34"/><rect x="214.9" y="167" width="15.4" height="9.8" fill="#a8743c"/><rect x="230.6" y="167" width="13" height="9.8" fill="#5aa0d8"/>
<rect x="203" y="171" width="6" height="4" fill="#c89a5a"/><rect x="218" y="169" width="7" height="5" fill="#d0a050"/><rect x="221" y="171" width="6" height="5.8" fill="#6a4426"/><rect x="230.6" y="173.4" width="13" height="3.4" fill="#2f6aa8"/>
<rect x="208.3" y="178.4" width="8.8" height="2.8" fill="#fff" stroke="#c8c4bc" stroke-width="0.3"/><rect x="221.4" y="178.4" width="15.6" height="2.8" fill="#f1da1c"/>
<text x="212.7" y="180.5" font-size="1.6" fill="#6a6660" text-anchor="middle">BACK</text><text x="229.2" y="180.5" font-size="1.6" fill="#5a5210" text-anchor="middle" textLength="12" lengthAdjust="spacingAndGlyphs">BOOK THIS HOTEL</text>
<rect x="184.3" y="186.2" width="77" height="34" fill="url(#lb1)"/>
<g font-family="'Liberation Serif',serif" font-style="italic" fill="#f6fafc" text-anchor="middle" font-size="3.6">
<text x="223.6" y="194.6" textLength="25" lengthAdjust="spacingAndGlyphs">Join our mailing list</text>
<text x="223.6" y="198.4" textLength="31" lengthAdjust="spacingAndGlyphs">for news, events and offers</text></g>
<rect x="203" y="201.2" width="15.4" height="2.4" fill="#f4f8fa"/><rect x="220" y="201.2" width="17" height="2.4" fill="#f4f8fa"/><rect x="238.5" y="201.2" width="5.8" height="2.4" fill="#f1da1c"/>
<text x="203.6" y="203.1" font-size="1.6" fill="#8a8a8a">Name</text><text x="220.6" y="203.1" font-size="1.6" fill="#8a8a8a">Email</text><text x="241.4" y="203.1" font-size="1.5" fill="#5a5210" text-anchor="middle">JOIN</text>
<circle cx="216.4" cy="208" r="0.7" fill="#f0f6fa"/>
<circle cx="219.2" cy="208" r="0.7" fill="#2a6ab8"/>
<circle cx="222.0" cy="208" r="0.7" fill="#f0f6fa"/>
<circle cx="224.8" cy="208" r="0.7" fill="#f0f6fa"/>
<circle cx="227.6" cy="208" r="0.7" fill="#f0f6fa"/>
<circle cx="230.4" cy="208" r="0.7" fill="#f0f6fa"/>
<path d="M193 220 C200 219.4 204 218 207.4 216.8 L212.8 214.4 L216 215.9 L218.6 216.7 L221.8 215.5 L224.8 214.8 L230 217 C236 219 244 219.6 254 220 Z" fill="#2c4a68"/>
<rect x="184.3" y="219.6" width="77" height="15" fill="url(#ft1)"/>
<path d="M193 219.8 H254 L250 221 L198 221 Z" fill="#2f5578"/>
<g font-size="2" fill="#e6eef6"><text x="199" y="224.4" textLength="8.6" lengthAdjust="spacingAndGlyphs">LODGING</text><text x="211.4" y="224.4" textLength="7" lengthAdjust="spacingAndGlyphs">DINING</text><text x="224" y="224.4" textLength="7.6" lengthAdjust="spacingAndGlyphs">EVENTS</text><text x="237" y="224.4" textLength="8" lengthAdjust="spacingAndGlyphs">FOLLOW</text></g>
<g fill="none" stroke="#d4e2f0" stroke-width="0.4"><rect x="201.6" y="227.4" width="2.2" height="3" rx="0.7"/><circle cx="214.6" cy="229" r="1.3"/><circle cx="226.8" cy="229" r="1.3"/></g>
<g fill="#c4d6ea"><rect x="237" y="226.4" width="7" height="0.4"/><rect x="237" y="227.8" width="5.6" height="0.4"/><rect x="237" y="229.2" width="6.4" height="0.4"/><rect x="237" y="230.6" width="4.6" height="0.4"/></g>
<rect x="184.3" y="232.2" width="77" height="2.3" fill="#214a74"/>
<text x="200" y="233.8" font-size="1.4" fill="#c4d6ea" textLength="22" lengthAdjust="spacingAndGlyphs">Copyright 2017 Lake Tahoe Lodging</text><text x="240" y="233.8" font-size="1.4" fill="#c4d6ea">Privacy</text>
</g>
</svg>

<div class="a" style="left:50.3px;top:271.8px;width:253.3px;height:144px;background:#fff;overflow:hidden"></div>
<svg class="a" style="left:50px;top:271px" width="254" height="146" viewBox="50 271 254 146">
<g fill="#34952a" stroke="#34952a" stroke-width="0.55" font-family="'DejaVu Sans','Liberation Sans',sans-serif" font-weight="200">
<text x="54.0" y="286.6" font-size="14.0" textLength="7.8" lengthAdjust="spacingAndGlyphs">-</text>
<text x="63.6" y="288.0" font-size="18.6" textLength="7.4" lengthAdjust="spacingAndGlyphs">F</text>
<text x="71.6" y="287.8" font-size="14.5" textLength="44.0" lengthAdjust="spacingAndGlyphs">inalize</text>
<text x="124.8" y="287.8" font-size="14.5" textLength="32.2" lengthAdjust="spacingAndGlyphs">web</text>
<text x="165.5" y="287.8" font-size="14.5" textLength="31.5" lengthAdjust="spacingAndGlyphs">copy</text>
<text x="206.0" y="287.8" font-size="14.5" textLength="31.0" lengthAdjust="spacingAndGlyphs">next</text>
<text x="246.3" y="287.8" font-size="14.5" textLength="37.7" lengthAdjust="spacingAndGlyphs">week</text>
<text x="54.7" y="304.0" font-size="14.0" textLength="4.5" lengthAdjust="spacingAndGlyphs">-</text>
<text x="63.0" y="311.6" font-size="21.0" textLength="12.0" lengthAdjust="spacingAndGlyphs">U</text>
<text x="76.0" y="310.8" font-size="15.5" textLength="35.7" lengthAdjust="spacingAndGlyphs">pdate</text>
<text x="122.0" y="310.8" font-size="15.5" textLength="35.6" lengthAdjust="spacingAndGlyphs">home</text>
<text x="169.4" y="310.8" font-size="15.5" textLength="32.6" lengthAdjust="spacingAndGlyphs">page</text>
<text x="218.0" y="310.8" font-size="15.5" textLength="72.0" lengthAdjust="spacingAndGlyphs">graphics</text>
<text x="54.7" y="338.0" font-size="15.0" textLength="5.8" lengthAdjust="spacingAndGlyphs">-</text>
<text x="64.4" y="342.8" font-size="25.0" textLength="13.2" lengthAdjust="spacingAndGlyphs">G</text>
<text x="78.4" y="342.4" font-size="16.5" textLength="18.3" lengthAdjust="spacingAndGlyphs">et</text>
<text x="106.4" y="342.6" font-size="17.0" textLength="28.9" lengthAdjust="spacingAndGlyphs">final</text>
<text x="147.6" y="342.6" font-size="16.5" textLength="54.6" lengthAdjust="spacingAndGlyphs">sign-off</text>
<text x="220.6" y="342.6" font-size="17.0" textLength="18.9" lengthAdjust="spacingAndGlyphs">by</text>
<text x="74.4" y="376.0" font-size="22.5" textLength="14.6" lengthAdjust="spacingAndGlyphs">M</text>
<text x="89.8" y="375.6" font-size="16.0" textLength="52.4" lengthAdjust="spacingAndGlyphs">arketing</text>
<text x="149.4" y="375.6" font-size="16.6" textLength="24.0" lengthAdjust="spacingAndGlyphs">V.P.</text>
<text x="187.5" y="375.6" font-size="17.0" textLength="33.8" lengthAdjust="spacingAndGlyphs">and</text>
<text x="234.4" y="375.6" font-size="17.0" textLength="46.2" lengthAdjust="spacingAndGlyphs">execs</text>
<text x="53.8" y="402.6" font-size="16.0" textLength="10.2" lengthAdjust="spacingAndGlyphs">-</text>
<text x="67.2" y="406.0" font-size="23.5" textLength="14.1" lengthAdjust="spacingAndGlyphs">L</text>
<text x="82.4" y="406.0" font-size="16.5" textLength="42.6" lengthAdjust="spacingAndGlyphs">aunch</text>
<text x="139.0" y="407.2" font-size="21.0" textLength="15.7" lengthAdjust="spacingAndGlyphs">W</text>
<text x="155.4" y="406.6" font-size="16.5" textLength="46.2" lengthAdjust="spacingAndGlyphs">ebsite</text>
</g></svg>
<svg class="a" style="left:325px;top:115px" width="410" height="245" viewBox="325 115 410 245" font-family="'Liberation Sans',sans-serif">
<rect x="330.9" y="119.7" width="396.3" height="235.4" fill="#0f1317"/>
<rect x="332.9" y="122.6" width="392.3" height="51.7" fill="#d5d7d3"/>
<rect x="334.2" y="123.2" width="4" height="4" fill="#2c7c48"/><path d="M335.2 124.2 L337.2 126.2 M337.2 124.2 L335.2 126.2" stroke="#e4e6e4" stroke-width="0.5"/>
<g fill="#8a8c8a"><rect x="342" y="123.8" width="2.6" height="2.8"/><rect x="349" y="124.8" width="3" height="0.8"/><rect x="358.6" y="124.8" width="3" height="0.8"/><rect x="355" y="125" width="0.8" height="0.8"/><rect x="364.6" y="125" width="0.8" height="0.8"/><rect x="368.6" y="125" width="1" height="0.8"/></g>
<text x="500.8" y="126.8" font-size="3.6" fill="#5a5c5a" textLength="54" lengthAdjust="spacingAndGlyphs">2017_Marketing_Timeline_Updated - Excel</text>
<path d="M555.4 124.6 L555.4 128 L556.3 127.2 L556.9 128.4 L557.4 128.1 L556.8 127 L557.9 126.9 Z" fill="#fff" stroke="#222" stroke-width="0.3"/>
<g fill="#666" font-size="3.8"><text x="692" y="127">?</text></g>
<g stroke="#666" stroke-width="0.5" fill="none"><rect x="698.4" y="124" width="3" height="2.4"/><path d="M706 126.2 H708.4"/><rect x="712.6" y="124" width="2.6" height="2.4"/><path d="M719.6 123.8 L722 126.4 M722 123.8 L719.6 126.4"/></g>
<rect x="332.9" y="128.6" width="13.8" height="6.2" fill="#2c7c48"/>
<text x="336.8" y="133" font-size="3.3" fill="#e8eae8" textLength="6.2" lengthAdjust="spacingAndGlyphs">FILE</text>
<rect x="348.4" y="128.8" width="15" height="6.2" fill="#e2e4e2" stroke="#bcbebc" stroke-width="0.3"/>
<text x="351.2" y="133" font-size="3.3" fill="#2c7c48" textLength="9.6" lengthAdjust="spacingAndGlyphs">HOME</text>
<text x="367.0" y="133" font-size="3.3" fill="#5a5c5a" textLength="9.6" lengthAdjust="spacingAndGlyphs">INSERT</text>
<text x="383.0" y="133" font-size="3.3" fill="#5a5c5a" textLength="19.0" lengthAdjust="spacingAndGlyphs">PAGE LAYOUT</text>
<text x="409.0" y="133" font-size="3.3" fill="#5a5c5a" textLength="15.0" lengthAdjust="spacingAndGlyphs">FORMULAS</text>
<text x="431.6" y="133" font-size="3.3" fill="#5a5c5a" textLength="7.6" lengthAdjust="spacingAndGlyphs">DATA</text>
<text x="446.0" y="133" font-size="3.3" fill="#5a5c5a" textLength="10.6" lengthAdjust="spacingAndGlyphs">REVIEW</text>
<text x="463.0" y="133" font-size="3.3" fill="#5a5c5a" textLength="7.0" lengthAdjust="spacingAndGlyphs">VIEW</text>
<text x="477.0" y="133" font-size="3.3" fill="#5a5c5a" textLength="8.0" lengthAdjust="spacingAndGlyphs">TEAM</text>
<text x="714.6" y="132.6" font-size="3.1" fill="#5a5c5a" textLength="9.6" lengthAdjust="spacingAndGlyphs">Sign in</text>
<rect x="332.9" y="135" width="392.3" height="23.2" fill="#d5d7d3"/>
<rect x="332.9" y="134.9" width="392.3" height="0.3" fill="#bcbebc"/>
<rect x="332.9" y="158.1" width="392.3" height="0.4" fill="#b4b6b4"/>
<rect x="369.4" y="136.4" width="0.3" height="20.6" fill="#bcbebc"/>
<rect x="423.2" y="136.4" width="0.3" height="20.6" fill="#bcbebc"/>
<rect x="484.4" y="136.4" width="0.3" height="20.6" fill="#bcbebc"/>
<rect x="521.4" y="136.4" width="0.3" height="20.6" fill="#bcbebc"/>
<rect x="611.4" y="136.4" width="0.3" height="20.6" fill="#bcbebc"/>
<rect x="645.2" y="136.4" width="0.3" height="20.6" fill="#bcbebc"/>
<rect x="335.8" y="137" width="6.4" height="7.4" rx="0.6" fill="#c2c4c2" stroke="#a2a4a2" stroke-width="0.3"/><rect x="337.6" y="136.4" width="2.8" height="1.4" fill="#9a9c9a"/><rect x="338.4" y="139.6" width="4.2" height="5" fill="#e0e2e0" stroke="#a6a8a6" stroke-width="0.3"/>
<text x="335.4" y="148.2" font-size="3.2" fill="#8a8c8a" textLength="7.4" lengthAdjust="spacingAndGlyphs">Paste</text>
<path d="M338.2 150 L339.2 151 L340.2 150 Z" fill="#8a8c8a"/>
<g fill="#8a8c8a"><rect x="345.2" y="137.2" width="2.4" height="2.2" rx="0.8"/><rect x="345" y="142.6" width="2.2" height="2.6"/><rect x="345.8" y="143.4" width="2.2" height="2.6" fill="#7a9ac0"/><rect x="345.2" y="148.4" width="2.6" height="1.4" fill="#d0a040"/><rect x="346" y="149.6" width="0.8" height="1.8"/></g>
<text x="348.8" y="139.8" font-size="3.2" fill="#5e605e" textLength="5.2" lengthAdjust="spacingAndGlyphs">Cut</text>
<text x="348.8" y="145.4" font-size="3.2" fill="#5e605e" textLength="7.6" lengthAdjust="spacingAndGlyphs">Copy</text>
<path d="M358.4 143.8 L359.2 144.8 L360 143.8 Z" fill="#8a8c8a"/>
<text x="348.8" y="151.0" font-size="3.2" fill="#5e605e" textLength="19.6" lengthAdjust="spacingAndGlyphs">Format Painter</text>
<text x="343.6" y="156.8" font-size="3.0" fill="#8a8c8a" textLength="12.4" lengthAdjust="spacingAndGlyphs">Clipboard</text>
<path d="M367 155.2 L368.4 156.6 M368.4 155.6 V156.6 H367.4" stroke="#8a8c8a" stroke-width="0.3" fill="none"/>
<rect x="372.2" y="138.2" width="26.8" height="4.8" fill="#dcdedc" stroke="#a8aaa8" stroke-width="0.3"/>
<text x="373.2" y="141.8" font-size="3.2" fill="#5e605e" textLength="6.2" lengthAdjust="spacingAndGlyphs">Arial</text>
<path d="M396.4 140 L397.2 141 L398 140 Z" fill="#666"/>
<rect x="399.6" y="138.2" width="10" height="4.8" fill="#dcdedc" stroke="#a8aaa8" stroke-width="0.3"/>
<text x="400.8" y="141.8" font-size="3.2" fill="#5e605e" textLength="3.2" lengthAdjust="spacingAndGlyphs">10</text>
<path d="M407 140 L407.8 141 L408.6 140 Z" fill="#666"/>
<text x="411.0" y="142.0" font-size="4.0" fill="#5e605e">A</text>
<text x="417.0" y="142.0" font-size="3.4" fill="#5e605e">A</text>
<path d="M414 138.8 L414.7 138 L415.4 138.8 Z" fill="#4a6a9a"/><path d="M419.4 138.2 L420.1 139 L420.8 138.2 Z" fill="#4a6a9a"/>
<rect x="372.2" y="145.2" width="5.6" height="5.6" fill="#9cc4a8" stroke="#6aa07c" stroke-width="0.3"/>
<text x="373.9" y="149.6" font-size="3.8" fill="#444" font-weight="bold">B</text>
<text x="379.6" y="149.6" font-size="3.8" fill="#555" font-style="italic" font-family="'Liberation Serif',serif">I</text>
<text x="384.6" y="149.6" font-size="3.8" fill="#555">U</text>
<rect x="384.4" y="150.2" width="3" height="0.3" fill="#555"/><path d="M389.2 148 L389.9 148.8 L390.6 148 Z" fill="#777"/>
<rect x="394.4" y="146.2" width="3.6" height="3.6" fill="none" stroke="#8a8c8a" stroke-width="0.4" stroke-dasharray="0.6 0.4"/><path d="M399.6 148 L400.3 148.8 L401 148 Z" fill="#777"/>
<path d="M405 148.8 L407 146 L409 148.2 L407 149.4 Z" fill="#8a8c8a"/><rect x="404.8" y="149.8" width="4.6" height="1.2" fill="#e8d820"/><path d="M410.6 148 L411.3 148.8 L412 148 Z" fill="#777"/>
<text x="413.6" y="149.2" font-size="3.8" fill="#555">A</text>
<rect x="413.2" y="149.8" width="3.8" height="1.2" fill="#d03030"/><path d="M418.4 148 L419.1 148.8 L419.8 148 Z" fill="#777"/>
<text x="391.8" y="156.8" font-size="3.0" fill="#8a8c8a" textLength="6.0" lengthAdjust="spacingAndGlyphs">Font</text>
<path d="M420.4 155.2 L421.8 156.6 M421.8 155.6 V156.6 H420.8" stroke="#8a8c8a" stroke-width="0.3" fill="none"/>
<rect x="428.4" y="137.6" width="5.6" height="5.4" fill="#9cc4a8" stroke="#6aa07c" stroke-width="0.3"/>
<rect x="422.9" y="145.2" width="5.6" height="5.6" fill="#9cc4a8" stroke="#6aa07c" stroke-width="0.3"/>
<rect x="423.6" y="138.2" width="4.0" height="0.4" fill="#7a7c7a"/>
<rect x="423.6" y="139.2" width="2.6" height="0.4" fill="#7a7c7a"/>
<rect x="423.6" y="140.2" width="4.0" height="0.4" fill="#7a7c7a"/>
<rect x="423.6" y="141.2" width="2.6" height="0.4" fill="#7a7c7a"/>
<rect x="429.2" y="139.0" width="4.0" height="0.4" fill="#7a7c7a"/>
<rect x="429.2" y="140.0" width="2.6" height="0.4" fill="#7a7c7a"/>
<rect x="429.2" y="141.0" width="4.0" height="0.4" fill="#7a7c7a"/>
<rect x="429.2" y="142.0" width="2.6" height="0.4" fill="#7a7c7a"/>
<rect x="434.8" y="140.0" width="4.0" height="0.4" fill="#7a7c7a"/>
<rect x="434.8" y="141.0" width="2.6" height="0.4" fill="#7a7c7a"/>
<rect x="434.8" y="142.0" width="4.0" height="0.4" fill="#7a7c7a"/>
<rect x="434.8" y="143.0" width="2.6" height="0.4" fill="#7a7c7a"/>
<rect x="423.8" y="146.4" width="4.0" height="0.4" fill="#7a7c7a"/>
<rect x="423.8" y="147.4" width="2.6" height="0.4" fill="#7a7c7a"/>
<rect x="423.8" y="148.4" width="4.0" height="0.4" fill="#7a7c7a"/>
<rect x="423.8" y="149.4" width="2.6" height="0.4" fill="#7a7c7a"/>
<rect x="429.3" y="146.4" width="4.0" height="0.4" fill="#7a7c7a"/>
<rect x="430.0" y="147.4" width="2.6" height="0.4" fill="#7a7c7a"/>
<rect x="429.3" y="148.4" width="4.0" height="0.4" fill="#7a7c7a"/>
<rect x="430.0" y="149.4" width="2.6" height="0.4" fill="#7a7c7a"/>
<rect x="434.8" y="146.4" width="4.0" height="0.4" fill="#7a7c7a"/>
<rect x="436.2" y="147.4" width="2.6" height="0.4" fill="#7a7c7a"/>
<rect x="434.8" y="148.4" width="4.0" height="0.4" fill="#7a7c7a"/>
<rect x="436.2" y="149.4" width="2.6" height="0.4" fill="#7a7c7a"/>
<path d="M441.6 142 L445 138.6" stroke="#7a7c7a" stroke-width="0.5"/><text x="442.6" y="142.4" font-size="2.6" fill="#7a7c7a">ab</text><path d="M447 140 L447.7 140.8 L448.4 140 Z" fill="#777"/>
<rect x="442.0" y="146.4" width="4.0" height="0.4" fill="#7a7c7a"/>
<rect x="443.4" y="147.4" width="2.6" height="0.4" fill="#7a7c7a"/>
<rect x="442.0" y="148.4" width="4.0" height="0.4" fill="#7a7c7a"/>
<rect x="443.4" y="149.4" width="2.6" height="0.4" fill="#7a7c7a"/>
<rect x="448.0" y="146.4" width="4.0" height="0.4" fill="#7a7c7a"/>
<rect x="449.4" y="147.4" width="2.6" height="0.4" fill="#7a7c7a"/>
<rect x="448.0" y="148.4" width="4.0" height="0.4" fill="#7a7c7a"/>
<rect x="449.4" y="149.4" width="2.6" height="0.4" fill="#7a7c7a"/>
<path d="M441.2 147.2 L442.2 148 L441.2 148.8 Z" fill="#4a6a9a"/><path d="M448.2 147.2 L447.2 148 L448.2 148.8 Z" fill="#4a6a9a"/>
<rect x="455" y="138" width="3.4" height="4" fill="#c2c4c2" stroke="#8a8c8a" stroke-width="0.3"/><rect x="455" y="146" width="3.4" height="3.6" fill="#c2c4c2" stroke="#8a8c8a" stroke-width="0.3"/>
<text x="459.6" y="141.6" font-size="3.2" fill="#5e605e" textLength="13.6" lengthAdjust="spacingAndGlyphs">Wrap Text</text>
<text x="459.6" y="149.2" font-size="3.2" fill="#5e605e" textLength="20.6" lengthAdjust="spacingAndGlyphs">Merge &amp; Center</text>
<path d="M481.4 147.6 L482.1 148.4 L482.8 147.6 Z" fill="#777"/>
<text x="446.0" y="156.8" font-size="3.0" fill="#8a8c8a" textLength="13.6" lengthAdjust="spacingAndGlyphs">Alignment</text>
<path d="M481.6 155.2 L483 156.6 M483 155.6 V156.6 H482" stroke="#8a8c8a" stroke-width="0.3" fill="none"/>
<rect x="487.4" y="137.8" width="31.8" height="5" fill="#dcdedc" stroke="#a8aaa8" stroke-width="0.3"/>
<text x="488.4" y="141.6" font-size="3.2" fill="#5e605e" textLength="10.4" lengthAdjust="spacingAndGlyphs">General</text>
<path d="M516.4 139.8 L517.2 140.8 L518 139.8 Z" fill="#666"/>
<text x="489.6" y="149.6" font-size="3.8" fill="#5e605e">$</text>
<path d="M493.4 148 L494.1 148.8 L494.8 148 Z" fill="#777"/>
<text x="497.2" y="149.6" font-size="3.8" fill="#5e605e">%</text>
<text x="503.6" y="149.4" font-size="4.4" fill="#5e605e">,</text>
<text x="509.4" y="149.4" font-size="2.6" fill="#4a6a9a">.0</text>
<text x="515.0" y="149.4" font-size="2.4" fill="#4a6a9a">.00</text>
<text x="496.8" y="156.8" font-size="3.0" fill="#8a8c8a" textLength="10.4" lengthAdjust="spacingAndGlyphs">Number</text>
<path d="M518.4 155.2 L519.8 156.6 M519.8 155.6 V156.6 H518.8" stroke="#8a8c8a" stroke-width="0.3" fill="none"/>
<rect x="528.6" y="137" width="6.8" height="7" fill="#e0e2e0" stroke="#8a8c8a" stroke-width="0.3"/><rect x="529.4" y="137.8" width="2" height="5.4" fill="#c04030"/><rect x="531.8" y="139.4" width="1.4" height="3.8" fill="#3a6ab0"/><rect x="533" y="141.2" width="2.8" height="3.2" fill="#e0e2e0" stroke="#7a7c7a" stroke-width="0.3"/>
<text x="523.2" y="148.2" font-size="3.2" fill="#5e605e" textLength="15.6" lengthAdjust="spacingAndGlyphs">Conditional</text>
<text x="523.6" y="152.0" font-size="3.2" fill="#5e605e" textLength="13.4" lengthAdjust="spacingAndGlyphs">Formatting</text>
<path d="M537.6 150.4 L538.2 151.2 L538.8 150.4 Z" fill="#777"/>
<rect x="543.4" y="137.4" width="7.4" height="6.2" fill="#e0e2e0" stroke="#8a8c8a" stroke-width="0.3"/><rect x="543.4" y="137.4" width="7.4" height="1.6" fill="#5a8ac0"/><path d="M548.8 144 L551.8 140.6 L552.6 141.4 L549.8 144.6 Z" fill="#6a6c6a"/>
<text x="540.0" y="148.2" font-size="3.2" fill="#5e605e" textLength="13.0" lengthAdjust="spacingAndGlyphs">Format as</text>
<text x="543.2" y="152.0" font-size="3.2" fill="#5e605e" textLength="6.6" lengthAdjust="spacingAndGlyphs">Table</text>
<path d="M550.6 150.4 L551.2 151.2 L551.8 150.4 Z" fill="#777"/>
<rect x="553.8" y="136.6" width="55.8" height="14.4" fill="#e0e2e0" stroke="#b0b2b0" stroke-width="0.3"/>
<rect x="554.6" y="137.7" width="24.7" height="5.2" fill="#6aa9e2"/>
<text x="555.6" y="141.6" font-size="3.0" fill="#1a3a5a" textLength="13.0" lengthAdjust="spacingAndGlyphs">20% - Fill Navy</text>
<rect x="580.8" y="137.7" width="24.6" height="5.2" fill="#7b7263"/>
<text x="582.0" y="141.6" font-size="3.0" fill="#2a2a2a" textLength="13.0" lengthAdjust="spacingAndGlyphs">40% - Fill Red</text>
<rect x="554.6" y="144.4" width="24.7" height="5.6" fill="#e8eae8" stroke="#4a9a5a" stroke-width="0.5"/>
<text x="555.8" y="148.6" font-size="3.1" fill="#444" textLength="8.4" lengthAdjust="spacingAndGlyphs">Normal</text>
<rect x="580.8" y="144.4" width="24.6" height="5.6" fill="#e2b4ac"/>
<text x="582.0" y="148.6" font-size="3.1" fill="#a02a20" textLength="4.6" lengthAdjust="spacingAndGlyphs">Bad</text>
<g fill="#8a8c8a"><path d="M607.2 139.2 L607.9 138.2 L608.6 139.2 Z"/><path d="M607.2 143.6 L607.9 144.6 L608.6 143.6 Z"/><path d="M607.2 148.2 L607.9 149.2 L608.6 148.2 Z"/><rect x="607.2" y="147.2" width="1.4" height="0.4"/></g>
<rect x="606.4" y="136.6" width="0.3" height="14.4" fill="#b0b2b0"/>
<text x="563.4" y="156.8" font-size="3.0" fill="#8a8c8a" textLength="8.4" lengthAdjust="spacingAndGlyphs">Styles</text>
<rect x="614.6" y="137.4" width="6.8" height="6.4" fill="#e0e2e0" stroke="#8a8c8a" stroke-width="0.3"/><rect x="614.6" y="139.4" width="6.8" height="2" fill="#6a9ad0"/>
<rect x="624.9" y="137.4" width="6.8" height="6.4" fill="#e0e2e0" stroke="#8a8c8a" stroke-width="0.3"/><rect x="624.9" y="139.4" width="6.8" height="2" fill="#6a9ad0"/>
<rect x="635.7" y="137.4" width="6.8" height="6.4" fill="#e0e2e0" stroke="#8a8c8a" stroke-width="0.3"/><rect x="635.7" y="139.4" width="6.8" height="2" fill="#6a9ad0"/>
<path d="M630 138 L632.4 140.4 M632.4 138 L630 140.4" stroke="#d03030" stroke-width="0.6"/>
<text x="614.6" y="148.2" font-size="3.2" fill="#5e605e" textLength="7.2" lengthAdjust="spacingAndGlyphs">Insert</text>
<text x="624.4" y="148.2" font-size="3.2" fill="#5e605e" textLength="8.4" lengthAdjust="spacingAndGlyphs">Delete</text>
<text x="634.6" y="148.2" font-size="3.2" fill="#5e605e" textLength="8.8" lengthAdjust="spacingAndGlyphs">Format</text>
<path d="M617.4 150.4 L618.0 151.2 L618.6 150.4 Z" fill="#777"/>
<path d="M627.8 150.4 L628.4 151.2 L629.0 150.4 Z" fill="#777"/>
<path d="M638.4 150.4 L639.0 151.2 L639.6 150.4 Z" fill="#777"/>
<text x="625.4" y="156.8" font-size="3.0" fill="#8a8c8a" textLength="6.6" lengthAdjust="spacingAndGlyphs">Cells</text>
<text x="647.0" y="139.8" font-size="4.4" fill="#444">Σ</text>
<text x="651.4" y="139.8" font-size="3.2" fill="#5e605e" textLength="12.6" lengthAdjust="spacingAndGlyphs">AutoSum</text>
<path d="M666 138.2 L666.7 139 L667.4 138.2 Z" fill="#777"/>
<rect x="647.2" y="142.6" width="3" height="3" fill="#c2c4c2" stroke="#5a8ac0" stroke-width="0.3"/>
<text x="651.4" y="145.4" font-size="3.2" fill="#5e605e" textLength="4.4" lengthAdjust="spacingAndGlyphs">Fill</text>
<path d="M657 143.8 L657.7 144.6 L658.4 143.8 Z" fill="#777"/>
<path d="M647.2 150.6 L649.4 147.6 L650.4 148.4 L648.6 151 Z" fill="#c04060"/>
<text x="651.4" y="151.0" font-size="3.2" fill="#5e605e" textLength="7.2" lengthAdjust="spacingAndGlyphs">Clear</text>
<path d="M659.8 149.4 L660.5 150.2 L661.2 149.4 Z" fill="#777"/>
<text x="671.0" y="140.4" font-size="2.8" fill="#3a6ab0">A</text>
<text x="671.0" y="143.8" font-size="2.8" fill="#555">Z</text>
<path d="M673.6 138.6 H677.6 L676 140.6 V143.6 H675.2 V140.6 Z" fill="#5a5c5a"/>
<text x="669.6" y="148.2" font-size="3.2" fill="#5e605e" textLength="8.2" lengthAdjust="spacingAndGlyphs">Sort &amp;</text>
<text x="669.8" y="152.0" font-size="3.2" fill="#5e605e" textLength="6.4" lengthAdjust="spacingAndGlyphs">Filter</text>
<path d="M677.2 150.4 L677.8 151.2 L678.4 150.4 Z" fill="#777"/>
<g fill="#4a4c4a"><rect x="682" y="139.4" width="2.6" height="4.4" rx="0.8"/><rect x="685.6" y="139.4" width="2.6" height="4.4" rx="0.8"/><rect x="682.8" y="137.6" width="1.4" height="2.4"/><rect x="686" y="137.6" width="1.4" height="2.4"/><rect x="684" y="140" width="2" height="1.4"/></g>
<text x="680.2" y="148.2" font-size="3.2" fill="#5e605e" textLength="8.8" lengthAdjust="spacingAndGlyphs">Find &amp;</text>
<text x="680.0" y="152.0" font-size="3.2" fill="#5e605e" textLength="8.0" lengthAdjust="spacingAndGlyphs">Select</text>
<path d="M688.6 150.4 L689.2 151.2 L689.8 150.4 Z" fill="#777"/>
<text x="663.8" y="156.8" font-size="3.0" fill="#8a8c8a" textLength="9.4" lengthAdjust="spacingAndGlyphs">Editing</text>
<path d="M720.4 156 L721.2 155.2 L722 156" stroke="#666" stroke-width="0.4" fill="none"/>
<rect x="332.9" y="158.5" width="392.3" height="10" fill="#d5d7d3"/>
<rect x="334.4" y="160.4" width="24.6" height="6.6" fill="#dddfdd" stroke="#b4b6b4" stroke-width="0.3"/>
<text x="335.4" y="164.8" font-size="3.2" fill="#5e605e" textLength="5.8" lengthAdjust="spacingAndGlyphs">B21</text>
<path d="M355.6 163 L356.4 164 L357.2 163 Z" fill="#777"/>
<g fill="#a0a2a0"><rect x="362.4" y="162.2" width="0.5" height="0.5"/><rect x="362.4" y="163.4" width="0.5" height="0.5"/><rect x="362.4" y="164.6" width="0.5" height="0.5"/></g>
<rect x="366.4" y="160.4" width="352" height="6.6" fill="#dddfdd" stroke="#b4b6b4" stroke-width="0.3"/>
<path d="M369.2 162.2 L371.8 165.2 M371.8 162.2 L369.2 165.2" stroke="#9a9c9a" stroke-width="0.4"/><path d="M378 163.8 L379 165 L381 162.2" stroke="#9a9c9a" stroke-width="0.4" fill="none"/>
<text x="386.4" y="165.4" font-size="4.0" fill="#555" font-style="italic" font-family="'Liberation Serif',serif">fx</text>
<rect x="393.4" y="160.6" width="0.3" height="6.2" fill="#b4b6b4"/>
<text x="397.0" y="164.8" font-size="3.2" fill="#6a6c6a" textLength="23.6" lengthAdjust="spacingAndGlyphs">Website Launch</text>
<path d="M720.4 163.2 L721.4 164.4 L722.4 163.2" stroke="#555" stroke-width="0.5" fill="none"/>
<rect x="332.9" y="168.3" width="392.3" height="0.3" fill="#b4b6b4"/>
<rect x="332.9" y="168.6" width="392.3" height="5.6" fill="#d2d4d2"/>
<path d="M339.8 170.2 V173.4 H336.6 Z" fill="#b0b2b0"/>
<text x="344.0" y="173.0" font-size="3.4" fill="#5e605e">A</text>
<rect x="350" y="168.8" width="173.3" height="5.2" fill="#bcbebb"/><rect x="350" y="173.8" width="173.3" height="0.5" fill="#3a8a54"/>
<text x="435.8" y="173.0" font-size="3.4" fill="#2c7c48">B</text>
<text x="526.5" y="173" font-size="3.4" fill="#5e605e" text-anchor="middle">C</text>
<text x="532.8" y="173" font-size="3.4" fill="#5e605e" text-anchor="middle">D</text>
<text x="539.2" y="173" font-size="3.4" fill="#5e605e" text-anchor="middle">E</text>
<text x="545.6" y="173" font-size="3.4" fill="#5e605e" text-anchor="middle">F</text>
<text x="551.9" y="173" font-size="3.4" fill="#5e605e" text-anchor="middle">G</text>
<text x="558.3" y="173" font-size="3.4" fill="#5e605e" text-anchor="middle">H</text>
<text x="564.6" y="173" font-size="3.4" fill="#5e605e" text-anchor="middle">I</text>
<text x="571.0" y="173" font-size="3.4" fill="#5e605e" text-anchor="middle">J</text>
<text x="577.4" y="173" font-size="3.4" fill="#5e605e" text-anchor="middle">K</text>
<text x="583.7" y="173" font-size="3.4" fill="#5e605e" text-anchor="middle">L</text>
<text x="590.1" y="173" font-size="3.4" fill="#5e605e" text-anchor="middle">M</text>
<text x="596.4" y="173" font-size="3.4" fill="#5e605e" text-anchor="middle">N</text>
<text x="602.8" y="173" font-size="3.4" fill="#5e605e" text-anchor="middle">O</text>
<text x="609.2" y="173" font-size="3.4" fill="#5e605e" text-anchor="middle">P</text>
<text x="615.5" y="173" font-size="3.4" fill="#5e605e" text-anchor="middle">Q</text>
<text x="621.9" y="173" font-size="3.4" fill="#5e605e" text-anchor="middle">R</text>
<text x="628.2" y="173" font-size="3.4" fill="#5e605e" text-anchor="middle">S</text>
<text x="634.6" y="173" font-size="3.4" fill="#5e605e" text-anchor="middle">T</text>
<text x="641.0" y="173" font-size="3.4" fill="#5e605e" text-anchor="middle">U</text>
<text x="647.3" y="173" font-size="3.4" fill="#5e605e" text-anchor="middle">V</text>
<text x="653.7" y="173" font-size="3.4" fill="#5e605e" text-anchor="middle">W</text>
<text x="660.0" y="173" font-size="3.4" fill="#5e605e" text-anchor="middle">X</text>
<text x="666.4" y="173" font-size="3.4" fill="#5e605e" text-anchor="middle">Y</text>
<text x="672.8" y="173" font-size="3.4" fill="#5e605e" text-anchor="middle">Z</text>
<text x="679.1" y="173" font-size="2.9" fill="#5e605e" text-anchor="middle">AA</text>
<text x="685.5" y="173" font-size="2.9" fill="#5e605e" text-anchor="middle">AB</text>
<text x="691.8" y="173" font-size="2.9" fill="#5e605e" text-anchor="middle">AC</text>
<text x="698.2" y="173" font-size="2.9" fill="#5e605e" text-anchor="middle">AD</text>
<text x="704.6" y="173" font-size="2.9" fill="#5e605e" text-anchor="middle">AE</text>
<text x="710.9" y="173" font-size="2.9" fill="#5e605e" text-anchor="middle">AF</text>
<text x="717.3" y="173" font-size="2.9" fill="#5e605e" text-anchor="middle">AG</text>
<rect x="332.9" y="174.2" width="7.6" height="147" fill="#d0d2d0"/>
<rect x="340.5" y="174.2" width="379" height="147" fill="#787876"/>
<rect x="719.5" y="168.6" width="5.7" height="152.6" fill="#d8dad6"/><rect x="720.2" y="175" width="3.8" height="118" fill="#c4c6c4"/>
<path d="M721.2 171.8 L722 170.8 L722.8 171.8 Z" fill="#666"/><rect x="720.4" y="169.4" width="3.4" height="3.6" fill="none" stroke="#aaa" stroke-width="0.3"/>
<path d="M721.2 317 L722 318 L722.8 317 Z" fill="#777"/>
<g fill="#8e8e8c"><rect x="350" y="202.8" width="369.5" height="0.35"/><rect x="350" y="209.2" width="369.5" height="0.35"/><rect x="350" y="217.6" width="369.5" height="0.35"/><rect x="350" y="226.6" width="369.5" height="0.35"/><rect x="350" y="235.3" width="369.5" height="0.35"/><rect x="350" y="243.7" width="369.5" height="0.35"/><rect x="350" y="252.2" width="369.5" height="0.35"/><rect x="350" y="261.5" width="369.5" height="0.35"/><rect x="350" y="269.7" width="369.5" height="0.35"/><rect x="350" y="278.0" width="369.5" height="0.35"/><rect x="350" y="286.3" width="369.5" height="0.35"/><rect x="350" y="294.6" width="369.5" height="0.35"/><rect x="350" y="303.2" width="369.5" height="0.35"/><rect x="350" y="312.8" width="369.5" height="0.35"/><rect x="350" y="321.0" width="369.5" height="0.35"/><rect x="523.30" y="209.4" width="0.35" height="111.8"/><rect x="529.66" y="209.4" width="0.35" height="111.8"/><rect x="536.02" y="209.4" width="0.35" height="111.8"/><rect x="542.38" y="209.4" width="0.35" height="111.8"/><rect x="548.74" y="209.4" width="0.35" height="111.8"/><rect x="555.10" y="209.4" width="0.35" height="111.8"/><rect x="561.46" y="209.4" width="0.35" height="111.8"/><rect x="567.82" y="209.4" width="0.35" height="111.8"/><rect x="574.18" y="209.4" width="0.35" height="111.8"/><rect x="580.54" y="209.4" width="0.35" height="111.8"/><rect x="586.90" y="209.4" width="0.35" height="111.8"/><rect x="593.26" y="209.4" width="0.35" height="111.8"/><rect x="599.62" y="209.4" width="0.35" height="111.8"/><rect x="605.98" y="209.4" width="0.35" height="111.8"/><rect x="612.34" y="209.4" width="0.35" height="111.8"/><rect x="618.70" y="209.4" width="0.35" height="111.8"/><rect x="625.06" y="209.4" width="0.35" height="111.8"/><rect x="631.42" y="209.4" width="0.35" height="111.8"/><rect x="637.78" y="209.4" width="0.35" height="111.8"/><rect x="644.14" y="209.4" width="0.35" height="111.8"/><rect x="650.50" y="209.4" width="0.35" height="111.8"/><rect x="656.86" y="209.4" width="0.35" height="111.8"/><rect x="663.22" y="209.4" width="0.35" height="111.8"/><rect x="669.58" y="209.4" width="0.35" height="111.8"/><rect x="675.94" y="209.4" width="0.35" height="111.8"/><rect x="682.30" y="209.4" width="0.35" height="111.8"/><rect x="688.66" y="209.4" width="0.35" height="111.8"/><rect x="695.02" y="209.4" width="0.35" height="111.8"/><rect x="701.38" y="209.4" width="0.35" height="111.8"/><rect x="707.74" y="209.4" width="0.35" height="111.8"/><rect x="714.10" y="209.4" width="0.35" height="111.8"/></g>
<g stroke="#555553" stroke-width="0.6" fill="none"><path d="M555.10 186.6 V321.2"/><path d="M586.90 186.6 V321.2"/><path d="M618.70 186.6 V321.2"/><path d="M650.50 186.6 V321.2"/><path d="M682.30 186.6 V321.2"/><path d="M714.10 186.6 V321.2"/></g>
<rect x="523.1" y="186.6" width="0.4" height="134.6" fill="#5a5a5a"/>
<rect x="350" y="190.0" width="369.5" height="9.2" fill="#b9c1c6"/>
<rect x="350" y="190.0" width="369.5" height="0.4" fill="#8fa3bf"/><rect x="350" y="198.8" width="369.5" height="0.4" fill="#8fa3bf"/>
<rect x="523.1" y="190.0" width="0.4" height="9.2" fill="#8fa3bf"/>
<rect x="350" y="218.6" width="369.5" height="8.2" fill="#b9c1c6"/>
<rect x="350" y="218.6" width="369.5" height="0.4" fill="#8fa3bf"/><rect x="350" y="226.4" width="369.5" height="0.4" fill="#8fa3bf"/>
<rect x="523.1" y="218.6" width="0.4" height="8.2" fill="#8fa3bf"/>
<rect x="350" y="253.5" width="369.5" height="8.2" fill="#b9c1c6"/>
<rect x="350" y="253.5" width="369.5" height="0.4" fill="#8fa3bf"/><rect x="350" y="261.3" width="369.5" height="0.4" fill="#8fa3bf"/>
<rect x="523.1" y="253.5" width="0.4" height="8.2" fill="#8fa3bf"/>
<rect x="350" y="303.7" width="369.5" height="9.3" fill="#b9c1c6"/>
<rect x="350" y="303.7" width="369.5" height="0.4" fill="#8fa3bf"/><rect x="350" y="312.6" width="369.5" height="0.4" fill="#8fa3bf"/>
<rect x="523.1" y="303.7" width="0.4" height="9.3" fill="#8fa3bf"/>
<rect x="350.2" y="303.9" width="173" height="8.9" fill="#bfc7ca" stroke="#3a8a54" stroke-width="0.6"/>
<text x="526.5" y="189.4" font-size="2.8" fill="#d8d8d8" text-anchor="middle">16</text>
<text x="526.5" y="193.8" font-size="2.8" fill="#3a3c3a" text-anchor="middle">M</text>
<rect x="523.30" y="190.4" width="0.3" height="4.2" fill="#8fa3bf"/>
<text x="532.8" y="189.4" font-size="2.8" fill="#d8d8d8" text-anchor="middle">17</text>
<text x="532.8" y="193.8" font-size="2.8" fill="#3a3c3a" text-anchor="middle">T</text>
<rect x="529.66" y="190.4" width="0.3" height="4.2" fill="#8fa3bf"/>
<text x="539.2" y="189.4" font-size="2.8" fill="#d8d8d8" text-anchor="middle">18</text>
<text x="539.2" y="193.8" font-size="2.8" fill="#3a3c3a" text-anchor="middle">W</text>
<rect x="536.02" y="190.4" width="0.3" height="4.2" fill="#8fa3bf"/>
<text x="545.6" y="189.4" font-size="2.8" fill="#d8d8d8" text-anchor="middle">19</text>
<text x="545.6" y="193.8" font-size="2.8" fill="#3a3c3a" text-anchor="middle">T</text>
<rect x="542.38" y="190.4" width="0.3" height="4.2" fill="#8fa3bf"/>
<text x="551.9" y="189.4" font-size="2.8" fill="#d8d8d8" text-anchor="middle">20</text>
<text x="551.9" y="193.8" font-size="2.8" fill="#3a3c3a" text-anchor="middle">F</text>
<rect x="548.74" y="190.4" width="0.3" height="4.2" fill="#8fa3bf"/>
<text x="558.3" y="189.4" font-size="2.8" fill="#d8d8d8" text-anchor="middle">23</text>
<text x="558.3" y="193.8" font-size="2.8" fill="#3a3c3a" text-anchor="middle">M</text>
<rect x="555.10" y="190.4" width="0.3" height="4.2" fill="#8fa3bf"/>
<text x="564.6" y="189.4" font-size="2.8" fill="#d8d8d8" text-anchor="middle">24</text>
<text x="564.6" y="193.8" font-size="2.8" fill="#3a3c3a" text-anchor="middle">T</text>
<rect x="561.46" y="190.4" width="0.3" height="4.2" fill="#8fa3bf"/>
<text x="571.0" y="189.4" font-size="2.8" fill="#d8d8d8" text-anchor="middle">25</text>
<text x="571.0" y="193.8" font-size="2.8" fill="#3a3c3a" text-anchor="middle">W</text>
<rect x="567.82" y="190.4" width="0.3" height="4.2" fill="#8fa3bf"/>
<text x="577.4" y="189.4" font-size="2.8" fill="#d8d8d8" text-anchor="middle">26</text>
<text x="577.4" y="193.8" font-size="2.8" fill="#3a3c3a" text-anchor="middle">T</text>
<rect x="574.18" y="190.4" width="0.3" height="4.2" fill="#8fa3bf"/>
<text x="583.7" y="189.4" font-size="2.8" fill="#d8d8d8" text-anchor="middle">27</text>
<text x="583.7" y="193.8" font-size="2.8" fill="#3a3c3a" text-anchor="middle">F</text>
<rect x="580.54" y="190.4" width="0.3" height="4.2" fill="#8fa3bf"/>
<text x="590.1" y="189.4" font-size="2.8" fill="#d8d8d8" text-anchor="middle">30</text>
<text x="590.1" y="193.8" font-size="2.8" fill="#3a3c3a" text-anchor="middle">M</text>
<rect x="586.90" y="190.4" width="0.3" height="4.2" fill="#8fa3bf"/>
<text x="596.4" y="189.4" font-size="2.8" fill="#d8d8d8" text-anchor="middle">31</text>
<text x="596.4" y="193.8" font-size="2.8" fill="#3a3c3a" text-anchor="middle">T</text>
<rect x="593.26" y="190.4" width="0.3" height="4.2" fill="#8fa3bf"/>
<text x="602.8" y="189.4" font-size="2.8" fill="#d8d8d8" text-anchor="middle">1</text>
<text x="602.8" y="193.8" font-size="2.8" fill="#3a3c3a" text-anchor="middle">W</text>
<rect x="599.62" y="190.4" width="0.3" height="4.2" fill="#8fa3bf"/>
<text x="609.2" y="189.4" font-size="2.8" fill="#d8d8d8" text-anchor="middle">2</text>
<text x="609.2" y="193.8" font-size="2.8" fill="#3a3c3a" text-anchor="middle">T</text>
<rect x="605.98" y="190.4" width="0.3" height="4.2" fill="#8fa3bf"/>
<text x="615.5" y="189.4" font-size="2.8" fill="#d8d8d8" text-anchor="middle">3</text>
<text x="615.5" y="193.8" font-size="2.8" fill="#3a3c3a" text-anchor="middle">F</text>
<rect x="612.34" y="190.4" width="0.3" height="4.2" fill="#8fa3bf"/>
<text x="621.9" y="189.4" font-size="2.8" fill="#d8d8d8" text-anchor="middle">6</text>
<text x="621.9" y="193.8" font-size="2.8" fill="#3a3c3a" text-anchor="middle">M</text>
<rect x="618.70" y="190.4" width="0.3" height="4.2" fill="#8fa3bf"/>
<text x="628.2" y="189.4" font-size="2.8" fill="#d8d8d8" text-anchor="middle">7</text>
<text x="628.2" y="193.8" font-size="2.8" fill="#3a3c3a" text-anchor="middle">T</text>
<rect x="625.06" y="190.4" width="0.3" height="4.2" fill="#8fa3bf"/>
<text x="634.6" y="189.4" font-size="2.8" fill="#d8d8d8" text-anchor="middle">8</text>
<text x="634.6" y="193.8" font-size="2.8" fill="#3a3c3a" text-anchor="middle">W</text>
<rect x="631.42" y="190.4" width="0.3" height="4.2" fill="#8fa3bf"/>
<text x="641.0" y="189.4" font-size="2.8" fill="#d8d8d8" text-anchor="middle">9</text>
<text x="641.0" y="193.8" font-size="2.8" fill="#3a3c3a" text-anchor="middle">T</text>
<rect x="637.78" y="190.4" width="0.3" height="4.2" fill="#8fa3bf"/>
<text x="647.3" y="189.4" font-size="2.8" fill="#d8d8d8" text-anchor="middle">10</text>
<text x="647.3" y="193.8" font-size="2.8" fill="#3a3c3a" text-anchor="middle">F</text>
<rect x="644.14" y="190.4" width="0.3" height="4.2" fill="#8fa3bf"/>
<text x="653.7" y="189.4" font-size="2.8" fill="#d8d8d8" text-anchor="middle">13</text>
<text x="653.7" y="193.8" font-size="2.8" fill="#3a3c3a" text-anchor="middle">M</text>
<rect x="650.50" y="190.4" width="0.3" height="4.2" fill="#8fa3bf"/>
<text x="660.0" y="189.4" font-size="2.8" fill="#d8d8d8" text-anchor="middle">14</text>
<text x="660.0" y="193.8" font-size="2.8" fill="#3a3c3a" text-anchor="middle">T</text>
<rect x="656.86" y="190.4" width="0.3" height="4.2" fill="#8fa3bf"/>
<text x="666.4" y="189.4" font-size="2.8" fill="#d8d8d8" text-anchor="middle">15</text>
<text x="666.4" y="193.8" font-size="2.8" fill="#3a3c3a" text-anchor="middle">W</text>
<rect x="663.22" y="190.4" width="0.3" height="4.2" fill="#8fa3bf"/>
<text x="672.8" y="189.4" font-size="2.8" fill="#d8d8d8" text-anchor="middle">16</text>
<text x="672.8" y="193.8" font-size="2.8" fill="#3a3c3a" text-anchor="middle">T</text>
<rect x="669.58" y="190.4" width="0.3" height="4.2" fill="#8fa3bf"/>
<text x="679.1" y="189.4" font-size="2.8" fill="#d8d8d8" text-anchor="middle">17</text>
<text x="679.1" y="193.8" font-size="2.8" fill="#3a3c3a" text-anchor="middle">F</text>
<rect x="675.94" y="190.4" width="0.3" height="4.2" fill="#8fa3bf"/>
<text x="685.5" y="189.4" font-size="2.8" fill="#d8d8d8" text-anchor="middle">20</text>
<text x="685.5" y="193.8" font-size="2.8" fill="#3a3c3a" text-anchor="middle">M</text>
<rect x="682.30" y="190.4" width="0.3" height="4.2" fill="#8fa3bf"/>
<text x="691.8" y="189.4" font-size="2.8" fill="#d8d8d8" text-anchor="middle">21</text>
<text x="691.8" y="193.8" font-size="2.8" fill="#3a3c3a" text-anchor="middle">T</text>
<rect x="688.66" y="190.4" width="0.3" height="4.2" fill="#8fa3bf"/>
<text x="698.2" y="189.4" font-size="2.8" fill="#d8d8d8" text-anchor="middle">22</text>
<text x="698.2" y="193.8" font-size="2.8" fill="#3a3c3a" text-anchor="middle">W</text>
<rect x="695.02" y="190.4" width="0.3" height="4.2" fill="#8fa3bf"/>
<text x="704.6" y="189.4" font-size="2.8" fill="#d8d8d8" text-anchor="middle">23</text>
<text x="704.6" y="193.8" font-size="2.8" fill="#3a3c3a" text-anchor="middle">T</text>
<rect x="701.38" y="190.4" width="0.3" height="4.2" fill="#8fa3bf"/>
<text x="710.9" y="189.4" font-size="2.8" fill="#d8d8d8" text-anchor="middle">24</text>
<text x="710.9" y="193.8" font-size="2.8" fill="#3a3c3a" text-anchor="middle">F</text>
<rect x="707.74" y="190.4" width="0.3" height="4.2" fill="#8fa3bf"/>
<text x="717.3" y="189.4" font-size="2.8" fill="#d8d8d8" text-anchor="middle">27</text>
<text x="717.3" y="193.8" font-size="2.8" fill="#3a3c3a" text-anchor="middle">M</text>
<rect x="714.10" y="190.4" width="0.3" height="4.2" fill="#8fa3bf"/>
<rect x="523.3" y="194.5" width="196.2" height="0.3" fill="#8fa3bf"/>
<text x="539.2" y="198.2" font-size="3" fill="#2c2e2c" font-weight="bold" text-anchor="middle">Jan-16</text>
<rect x="523.30" y="190" width="0.5" height="9.2" fill="#6a7a9a"/>
<rect x="524.3" y="185.8" width="0.8" height="0.8" fill="#2c7c48"/>
<text x="571.0" y="198.2" font-size="3" fill="#2c2e2c" font-weight="bold" text-anchor="middle">Jan-23</text>
<rect x="555.10" y="190" width="0.5" height="9.2" fill="#6a7a9a"/>
<rect x="556.1" y="185.8" width="0.8" height="0.8" fill="#2c7c48"/>
<text x="602.8" y="198.2" font-size="3" fill="#2c2e2c" font-weight="bold" text-anchor="middle">Jan-30</text>
<rect x="586.90" y="190" width="0.5" height="9.2" fill="#6a7a9a"/>
<rect x="587.9" y="185.8" width="0.8" height="0.8" fill="#2c7c48"/>
<text x="634.6" y="198.2" font-size="3" fill="#2c2e2c" font-weight="bold" text-anchor="middle">Feb-06</text>
<rect x="618.70" y="190" width="0.5" height="9.2" fill="#6a7a9a"/>
<rect x="619.7" y="185.8" width="0.8" height="0.8" fill="#2c7c48"/>
<text x="666.4" y="198.2" font-size="3" fill="#2c2e2c" font-weight="bold" text-anchor="middle">Feb-13</text>
<rect x="650.50" y="190" width="0.5" height="9.2" fill="#6a7a9a"/>
<rect x="651.5" y="185.8" width="0.8" height="0.8" fill="#2c7c48"/>
<text x="698.2" y="198.2" font-size="3" fill="#2c2e2c" font-weight="bold" text-anchor="middle">Feb-20</text>
<rect x="682.30" y="190" width="0.5" height="9.2" fill="#6a7a9a"/>
<rect x="683.3" y="185.8" width="0.8" height="0.8" fill="#2c7c48"/>
<rect x="529.96" y="209.6" width="6.06" height="7.9" fill="#b85a4c"/>
<rect x="561.76" y="209.6" width="6.06" height="7.9" fill="#b85a4c"/>
<rect x="593.56" y="209.6" width="6.06" height="7.9" fill="#b85a4c"/>
<rect x="625.36" y="209.6" width="6.06" height="7.9" fill="#b85a4c"/>
<rect x="657.16" y="209.6" width="6.06" height="7.9" fill="#b85a4c"/>
<rect x="688.96" y="209.6" width="6.06" height="7.9" fill="#b85a4c"/>
<rect x="523.60" y="227.0" width="25.14" height="8.2" fill="#2b5a8a"/>
<rect x="593.56" y="235.7" width="31.50" height="7.9" fill="#2b5a8a"/>
<rect x="644.44" y="244.1" width="6.06" height="8.0" fill="#2b5a8a"/>
<rect x="542.68" y="261.9" width="6.06" height="7.7" fill="#b85a4c"/>
<rect x="555.40" y="270.1" width="31.50" height="7.8" fill="#2b5a8a"/>
<rect x="606.28" y="278.4" width="6.06" height="7.8" fill="#b85a4c"/>
<rect x="625.36" y="295.0" width="25.14" height="8.1" fill="#2b5a8a"/>
<rect x="650.80" y="313.2" width="31.50" height="7.7" fill="#2b5a8a"/>
<g fill="#44709e"><rect x="529.66" y="227.0" width="0.4" height="8.2"/><rect x="536.02" y="227.0" width="0.4" height="8.2"/><rect x="542.38" y="227.0" width="0.4" height="8.2"/><rect x="599.62" y="235.7" width="0.4" height="7.9"/><rect x="605.98" y="235.7" width="0.4" height="7.9"/><rect x="612.34" y="235.7" width="0.4" height="7.9"/><rect x="618.70" y="235.7" width="0.4" height="7.9"/><rect x="561.46" y="270.1" width="0.4" height="7.8"/><rect x="567.82" y="270.1" width="0.4" height="7.8"/><rect x="574.18" y="270.1" width="0.4" height="7.8"/><rect x="580.54" y="270.1" width="0.4" height="7.8"/><rect x="631.42" y="295.0" width="0.4" height="8.1"/><rect x="637.78" y="295.0" width="0.4" height="8.1"/><rect x="644.14" y="295.0" width="0.4" height="8.1"/><rect x="656.86" y="313.2" width="0.4" height="7.7"/><rect x="663.22" y="313.2" width="0.4" height="7.7"/><rect x="669.58" y="313.2" width="0.4" height="7.7"/><rect x="675.94" y="313.2" width="0.4" height="7.7"/></g>
<text x="336.9" y="183.0" font-size="3.5" fill="#525452" text-anchor="middle">1</text>
<text x="336.9" y="189.0" font-size="3.5" fill="#525452" text-anchor="middle">2</text>
<text x="336.9" y="193.4" font-size="3.5" fill="#525452" text-anchor="middle">3</text>
<text x="336.9" y="198.2" font-size="3.5" fill="#525452" text-anchor="middle">4</text>
<text x="336.9" y="207.4" font-size="3.5" fill="#525452" text-anchor="middle">6</text>
<text x="336.9" y="214.8" font-size="3.5" fill="#525452" text-anchor="middle">7</text>
<text x="336.9" y="223.9" font-size="3.5" fill="#525452" text-anchor="middle">9</text>
<text x="336.9" y="232.3" font-size="3.5" fill="#525452" text-anchor="middle">10</text>
<text x="336.9" y="240.9" font-size="3.5" fill="#525452" text-anchor="middle">11</text>
<text x="336.9" y="249.3" font-size="3.5" fill="#525452" text-anchor="middle">12</text>
<text x="336.9" y="258.8" font-size="3.5" fill="#525452" text-anchor="middle">14</text>
<text x="336.9" y="267.0" font-size="3.5" fill="#525452" text-anchor="middle">15</text>
<text x="336.9" y="275.2" font-size="3.5" fill="#525452" text-anchor="middle">16</text>
<text x="336.9" y="283.6" font-size="3.5" fill="#525452" text-anchor="middle">17</text>
<text x="336.9" y="291.8" font-size="3.5" fill="#525452" text-anchor="middle">18</text>
<text x="336.9" y="300.3" font-size="3.5" fill="#525452" text-anchor="middle">19</text>
<rect x="333.3" y="303.7" width="7.2" height="9.3" fill="#b8bab8"/>
<text x="336.9" y="309.6" font-size="3.5" fill="#2c7c48" text-anchor="middle">21</text>
<text x="336.9" y="318.3" font-size="3.5" fill="#525452" text-anchor="middle">22</text>
<text x="351.2" y="183.6" font-size="5" fill="#dadada" font-weight="bold" font-style="italic" textLength="68" lengthAdjust="spacingAndGlyphs">2017 1H Marketing Projects</text>
<text x="351" y="195.8" font-size="3.8" fill="#1c1e1c" font-weight="bold" textLength="74.6" lengthAdjust="spacingAndGlyphs">Marketing Team Timeline and Checklist</text>
<text x="351" y="208" font-size="3.6" fill="#d4d4d4" textLength="17.6" lengthAdjust="spacingAndGlyphs" text-decoration="underline">On-going</text><rect x="351" y="208.6" width="17.6" height="0.3" fill="#d4d4d4"/>
<text x="355.0" y="215.7" font-size="3.6" fill="#d2d2d2" textLength="34.0" lengthAdjust="spacingAndGlyphs">Weekly Team Sync</text>
<text x="351" y="224.2" font-size="3.8" fill="#1c1e1c" font-weight="bold" textLength="42.6" lengthAdjust="spacingAndGlyphs">Product Launch Plans</text>
<text x="355.0" y="233.1" font-size="3.6" fill="#d2d2d2" textLength="33.2" lengthAdjust="spacingAndGlyphs">First round of edits</text>
<text x="355.0" y="241.3" font-size="3.6" fill="#d2d2d2" textLength="39.0" lengthAdjust="spacingAndGlyphs">Second round of edits</text>
<text x="355.0" y="249.9" font-size="3.6" fill="#d2d2d2" textLength="27.0" lengthAdjust="spacingAndGlyphs">Final proofread</text>
<text x="351" y="259.0" font-size="3.8" fill="#1c1e1c" font-weight="bold" textLength="24.6" lengthAdjust="spacingAndGlyphs">Whitepapers</text>
<text x="355.0" y="267.7" font-size="3.6" fill="#d2d2d2" textLength="46.4" lengthAdjust="spacingAndGlyphs">Meeting to discuss papers</text>
<text x="355.0" y="275.9" font-size="3.6" fill="#d2d2d2" textLength="33.2" lengthAdjust="spacingAndGlyphs">First round of edits</text>
<text x="355.0" y="284.3" font-size="3.6" fill="#d2d2d2" textLength="29.0" lengthAdjust="spacingAndGlyphs">Follow-up meeting</text>
<text x="355.0" y="292.5" font-size="3.6" fill="#d2d2d2" textLength="39.0" lengthAdjust="spacingAndGlyphs">Second round of edits</text>
<text x="357.0" y="300.9" font-size="3.6" fill="#d2d2d2" textLength="27.0" lengthAdjust="spacingAndGlyphs">Final proofread</text>
<text x="351" y="309.8" font-size="3.8" fill="#1c1e1c" font-weight="bold" textLength="30.6" lengthAdjust="spacingAndGlyphs">Website Launch</text>
<text x="357.0" y="318.9" font-size="3.6" fill="#d2d2d2" textLength="47.0" lengthAdjust="spacingAndGlyphs">Research design elements</text>
<rect x="332.9" y="321.2" width="392.3" height="6.7" fill="#d6d8d6"/>
<rect x="340.5" y="321.1" width="379" height="0.3" fill="#a4a6a4"/>
<path d="M339 323.8 L338 324.6 L339 325.4 M346.4 323.8 L347.4 324.6 L346.4 325.4" stroke="#a8aaa8" stroke-width="0.4" fill="none"/>
<rect x="357.8" y="321.3" width="20.4" height="6.2" fill="#e4e6e4"/><rect x="357.8" y="327" width="20.4" height="0.6" fill="#2c7c48"/>
<text x="360.6" y="325.6" font-size="3.1" fill="#2c7c48" textLength="14.6" lengthAdjust="spacingAndGlyphs" font-weight="bold">Timetable</text>
<text x="381.6" y="325.6" font-size="3.1" fill="#6a6c6a" textLength="9.6" lengthAdjust="spacingAndGlyphs">Sheet1</text>
<rect x="394.8" y="322.4" width="0.3" height="4.4" fill="#b4b6b4"/>
<circle cx="404" cy="324.6" r="1.7" fill="none" stroke="#8a8c8a" stroke-width="0.4"/><path d="M403 324.6 H405 M404 323.6 V325.6" stroke="#8a8c8a" stroke-width="0.4"/>
<g fill="#a0a2a0"><rect x="567.6" y="323.4" width="0.5" height="0.5"/><rect x="567.6" y="324.6" width="0.5" height="0.5"/><rect x="567.6" y="325.8" width="0.5" height="0.5"/></g>
<rect x="571" y="322.2" width="148" height="4.8" fill="#cfd1cf"/><rect x="575.2" y="322.8" width="12" height="3.6" fill="#e2e4e2" stroke="#b0b2b0" stroke-width="0.3"/>
<path d="M573.6 323.8 L572.6 324.6 L573.6 325.4 Z" fill="#666"/><path d="M716.4 323.8 L717.4 324.6 L716.4 325.4 Z" fill="#666"/>
<rect x="714.8" y="322.2" width="4.4" height="4.8" fill="none" stroke="#b0b2b0" stroke-width="0.3"/>
<rect x="332.9" y="327.9" width="392.3" height="5" fill="#2f7d4c"/>
<text x="334.6" y="331.6" font-size="2.8" fill="#d8ead8" textLength="7.0" lengthAdjust="spacingAndGlyphs">READY</text>
<g fill="none" stroke="#cfe4d4" stroke-width="0.4"><rect x="656.6" y="329" width="2.8" height="2.8"/><rect x="665.6" y="329" width="3.4" height="2.8"/><rect x="674.6" y="329" width="3.4" height="2.8"/><path d="M683 330.4 H711.6"/></g>
<rect x="697.4" y="329" width="1" height="2.8" fill="#e4f0e4"/><rect x="710.8" y="329.2" width="0.5" height="2.4" fill="#cfe4d4"/><rect x="682.4" y="330.2" width="1.6" height="0.5" fill="#cfe4d4"/>
<text x="716.0" y="331.6" font-size="2.8" fill="#d8ead8" textLength="6.6" lengthAdjust="spacingAndGlyphs">100%</text>
<rect x="332.9" y="332.9" width="392.3" height="10" fill="#a9843a"/>
<rect x="525" y="332.9" width="24.2" height="10" fill="#8e7a46"/>
<rect x="549.2" y="332.9" width="124.4" height="10" fill="#b3a57e"/>
<path d="M673.4 332.9 L682 342.9 L673.4 342.9 Z" fill="#b3a57e"/>
<rect x="333.3" y="332.9" width="215.9" height="0.4" fill="#c09a4a"/>
<g fill="#eef0f0"><path d="M336 335.6 L338.4 335.2 V337.6 H336 Z"/><path d="M338.8 335.1 L341.8 334.6 V337.6 H338.8 Z"/><path d="M336 338 H338.4 V340.4 L336 340 Z"/><path d="M338.8 338 H341.8 V341 L338.8 340.5 Z"/></g>
<rect x="349" y="334.6" width="7" height="6.6" fill="#b8d4e4"/><path d="M349 341.2 L351.6 336 L353.2 339 L354.4 337.4 L356 341.2 Z" fill="#e8b84a"/><rect x="349" y="334.6" width="7" height="6.6" fill="none" stroke="#e8ecec" stroke-width="0.4"/>
<rect x="364" y="334.4" width="7.2" height="7" rx="0.6" fill="#2a9a3e"/><rect x="365.6" y="336" width="3.6" height="3.4" fill="none" stroke="#eef4ee" stroke-width="0.7"/><rect x="368.2" y="339" width="1.8" height="1.4" fill="#eef4ee"/>
<rect x="379" y="334.6" width="4.6" height="6.6" fill="#2a6cb4"/><rect x="383" y="335.6" width="3.8" height="4.6" fill="#4a8cd0"/><circle cx="381.3" cy="337.9" r="1.3" fill="none" stroke="#eef0f4" stroke-width="0.6"/>
<rect x="391.6" y="333.6" width="11" height="8.8" fill="#9c7e40" stroke="#c8b070" stroke-width="0.3" stroke-dasharray="0.6 0.4"/>
<circle cx="397.4" cy="337.9" r="3.3" fill="#d84a3a"/><path d="M397.4 337.9 L394.4 336.4 A3.3 3.3 0 0 0 397 341.2 Z" fill="#3aa04a"/><path d="M397.4 337.9 L397 341.2 A3.3 3.3 0 0 0 400.6 337 Z" fill="#e8c43a"/><circle cx="397.4" cy="337.9" r="1.4" fill="#4a8ad8" stroke="#f0f0f0" stroke-width="0.4"/>
<rect x="406.8" y="333.6" width="11.2" height="8.8" fill="#98803e" stroke="#c8b070" stroke-width="0.3" stroke-dasharray="0.6 0.4"/>
<rect x="409.4" y="334.8" width="4.6" height="6.2" fill="#2c7c48"/><rect x="413.4" y="335.6" width="3" height="4.6" fill="#e4ece4" stroke="#2c7c48" stroke-width="0.3"/><path d="M410.6 336.4 L412.8 339.6 M412.8 336.4 L410.6 339.6" stroke="#f0f4f0" stroke-width="0.6"/>
<g fill="#e8e4d8"><path d="M678 336.6 L679 337.6 L680 336.6" stroke="#e8e4d8" stroke-width="0.4" fill="none"/><rect x="684" y="336.4" width="1.8" height="2"/><rect x="690.4" y="335.8" width="1.6" height="3"/><rect x="695.4" y="336.4" width="2.2" height="1.8"/><rect x="701" y="336.4" width="1.4" height="2"/></g>
<text x="709.2" y="337.0" font-size="2.7" fill="#efe8d4" textLength="10.0" lengthAdjust="spacingAndGlyphs">2:17 PM</text>
<text x="707.6" y="341.2" font-size="2.7" fill="#efe8d4" textLength="12.4" lengthAdjust="spacingAndGlyphs">1/12/2017</text>
<rect x="332.9" y="342.9" width="392.3" height="10.8" fill="#14181c"/>
<text x="344.6" y="349.0" font-size="3.6" fill="#e4e6e8" textLength="33.6" lengthAdjust="spacingAndGlyphs">QA Lab X40 2nd Gen</text>
<rect x="331.6" y="120.4" width="394.9" height="234.0" fill="none" stroke="#0f8dc4" stroke-width="1.4"/>
<g fill="none" stroke="#6a3dd6" stroke-width="1.7" stroke-linecap="round" stroke-linejoin="round">
<path d="M366 214.5 C352 215.5 333.5 220 332.8 230 C332.4 240 352 248.6 383 248.2 C410 247.8 430 241.5 429.6 231.5 C429.2 222 408 214.5 386 213.6 C376 213.2 364 213.6 355 215.6"/>
<path d="M433.8 233.2 C455 232.6 480 233.4 509.6 232.4"/>
<path d="M490.6 223.6 C497 227.4 503 230.4 510 232.4 C503 235 497 238.6 491.6 243.6"/>
</g>
</svg>
<div class="a" style="left:254.5px;top:119.8px;width:57.8px;height:234.6px;background:#40464d"></div>
<div class="a" style="left:312.3px;top:119.8px;width:19px;height:234.6px;background:#30353b"></div>
<div class="a" style="left:254.5px;top:228px;width:57.8px;height:19px;background:#30353b"></div>
<div class="t" id="mi0" style="left:273.2px;top:196.5px;font-size:6.3px;letter-spacing:-0.55px;color:#9aa1a9;font-weight:normal">REMOVE</div>
<div class="t" id="mi1" style="left:273.2px;top:215.5px;font-size:6.3px;letter-spacing:-0.55px;color:#9aa1a9;font-weight:normal">FOCUS</div>
<div class="t" id="mi2" style="left:273.2px;top:234.6px;font-size:6.3px;letter-spacing:-0.64px;color:#ffffff;font-weight:bold">ANNOTATE</div>
<div class="t" id="mi3" style="left:273.2px;top:253.0px;font-size:6.3px;letter-spacing:-0.55px;color:#9aa1a9;font-weight:normal">FLOAT</div>
<div class="t" id="mi4" style="left:273.2px;top:272.1px;font-size:6.3px;letter-spacing:-0.55px;color:#9aa1a9;font-weight:normal">DESELECT</div>
<svg class="a" style="left:254px;top:190px" width="80" height="95" viewBox="254 190 80 95"><path d="M260.4 196.4 L267 203 M267 196.4 L260.4 203" stroke="#aab1b9" stroke-width="0.7"/><circle cx="262.8" cy="217.8" r="2.6" fill="none" stroke="#9aa1a9" stroke-width="0.7"/><path d="M264.8 219.8 L267.2 222.2" stroke="#9aa1a9" stroke-width="0.9"/><path d="M261.6 217.8 H264 M262.8 216.6 V219" stroke="#9aa1a9" stroke-width="0.5"/><path d="M260.4 241.2 L260.9 238.9 L265.3 234.5 L267.1 236.3 L262.7 240.7 Z" fill="#fff"/><rect x="260.4" y="252.4" width="4.4" height="4.4" fill="none" stroke="#9aa1a9" stroke-width="0.7"/><rect x="262.8" y="254.8" width="4.6" height="4.6" fill="#9aa1a9"/><rect x="260.6" y="272" width="6.6" height="6.6" fill="none" stroke="#9aa1a9" stroke-width="0.8" stroke-dasharray="1.6 1"/><g fill="#a4abb3"><rect x="318.4" y="206.2" width="6.8" height="1"/><rect x="320.6" y="205.4" width="2.4" height="0.9"/><rect x="319" y="207.7" width="5.6" height="5.4" rx="0.4"/></g><path d="M320.6 208.6 V212.2 M321.8 208.6 V212.2 M323 208.6 V212.2" stroke="#30353b" stroke-width="0.4"/><g transform="rotate(-30 322 228.4)"><rect x="317.8" y="226.2" width="8.4" height="4.4" rx="0.6" fill="#e8eaec"/><rect x="317.8" y="226.2" width="3.2" height="4.4" rx="0.6" fill="#a4abb3"/></g><circle cx="321.8" cy="246.4" r="0.8" fill="#7a45e0"/><circle cx="321.8" cy="266.2" r="3" fill="#7a45e0"/></svg>
<div class="a" style="left:0;top:419.6px;width:800px;height:19.4px;background:#3e444b"></div>
<div class="a" style="left:387px;top:409.2px;width:24.8px;height:11px;background:#3e444b"></div>
<svg class="a" style="left:0;top:405px" width="800" height="34" viewBox="0 405 800 34"><path d="M396.6 413.6 L399.4 416 L402.2 413.6" stroke="#9aa1a9" stroke-width="0.7" fill="none"/><path d="M3 427 H13 M3 430.4 H13 M3 433.8 H13" stroke="#868d95" stroke-width="0.9"/><g fill="#8b929a"><circle cx="789.8" cy="428.6" r="1.6"/><path d="M786.6 433.8 Q786.6 430.6 789.8 430.6 Q793 430.6 793 433.8 Z"/><circle cx="794.2" cy="429.6" r="1.1"/><path d="M793.4 433.8 Q793.6 431.4 794.4 431.2 Q796.6 431.4 796.6 433.8 Z"/></g></svg>
<div class="t" id="m1" style="left:324px;top:428.3px;font-size:5.7px;color:#b3bac2">PROJECTS</div>
<div class="t" id="m2" style="left:369px;top:428.3px;font-size:5.7px;color:#b3bac2">WORKSPACES</div>
<div class="t" id="m3" style="left:425px;top:428.3px;font-size:5.7px;color:#b3bac2">FILES</div>
<div class="t" id="m4" style="left:456px;top:428.3px;font-size:5.7px;color:#b3bac2">TOOLS</div>
<div class="a" style="left:0;top:0;width:800px;height:13px;background:#dbdbdb"></div>
<div class="a" style="left:0;top:13px;width:800px;height:16px;background:#f2f2f2;border-bottom:1px solid #c4c4c4"></div>
<div class="a" style="left:1.8px;top:3.4px;width:5.6px;height:5.6px;border-radius:50%;background:#e0614f"></div>
<div class="a" style="left:9.8px;top:3.4px;width:5.6px;height:5.6px;border-radius:50%;background:#e5bd3a"></div>
<div class="a" style="left:18.2px;top:3.4px;width:5.6px;height:5.6px;border-radius:50%;background:#5cc04a"></div>
<svg class="a" style="left:0;top:0" width="800" height="29" viewBox="0 0 800 29"><path d="M26.5 13.2 L31 2.6 Q31.5 1.6 32.8 1.6 L121.8 1.6 Q123.2 1.6 123.8 2.6 L129 13.2 Z" fill="#f2f2f2" stroke="#b4b4b4" stroke-width="0.5"/><path d="M127.2 5.4 L138.4 5.4 L141.4 10.9 L130.2 10.9 Z" fill="#d6d6d6" stroke="#bcbcbc" stroke-width="0.5"/><rect x="0" y="13" width="26.6" height="0.5" fill="#b9b9b9"/><rect x="129" y="13" width="671" height="0.5" fill="#b9b9b9"/><rect x="34" y="4.6" width="6.8" height="6.8" rx="0.6" fill="#3a9bdc"/><path d="M35.6 10 V6 H38.3 V8.3 H36.6" fill="none" stroke="#fff" stroke-width="0.8"/><path d="M118.5 6.2 L121.5 9.2 M121.5 6.2 L118.5 9.2" stroke="#4a4a4a" stroke-width="0.8"/><path d="M2.6 21.4 H8 M2.6 21.4 L5.2 18.8 M2.6 21.4 L5.2 24" stroke="#5a5a5a" stroke-width="0.8" fill="none"/><path d="M13.4 21.4 H18.8 M18.8 21.4 L16.2 18.8 M18.8 21.4 L16.2 24" stroke="#c4c4c4" stroke-width="0.8" fill="none"/><path d="M30.3 20.2 A2.7 2.7 0 1 0 30.6 22.6" stroke="#5a5a5a" stroke-width="0.8" fill="none"/><path d="M28.9 20.6 H30.9 V18.4 Z" fill="#5a5a5a"/><rect x="35.8" y="15.4" width="704" height="11.4" rx="1.6" fill="#fff" stroke="#c9c9c9" stroke-width="0.6"/><rect x="40.3" y="20.4" width="3.4" height="3" rx="0.4" fill="#2e8b3d"/><path d="M41 20.6 V19.5 A1 1 0 0 1 43 19.5 V20.6" stroke="#2e8b3d" stroke-width="0.6" fill="none"/><rect x="68" y="17.2" width="0.4" height="7.8" fill="#d8d8d8"/><path d="M734.3 18.4 L735.2 20.4 L737.3 20.6 L735.7 22 L736.2 24.1 L734.3 23 L732.4 24.1 L732.9 22 L731.3 20.6 L733.4 20.4 Z" fill="none" stroke="#555" stroke-width="0.6"/><path d="M744.6 23.4 L747.4 18.6 L750.4 23.4 Z" fill="#c6c6c6"/><circle cx="749" cy="22.6" r="1.6" fill="#c6c6c6"/><circle cx="759.2" cy="21.2" r="2.6" fill="none" stroke="#555" stroke-width="0.6"/><rect x="758.9" y="19.7" width="0.7" height="3" fill="#555"/><circle cx="770.8" cy="21.2" r="2.9" fill="#b5713c"/><circle cx="769.8" cy="20.4" r="1" fill="#e8c27a"/><circle cx="771.8" cy="22.2" r="0.9" fill="#6a4a8c"/><rect x="779.6" y="18.4" width="5.8" height="5.6" rx="0.8" fill="#9a9a9a"/><rect x="781" y="19.8" width="3" height="2.6" fill="#f4f4f4"/><circle cx="794.2" cy="19" r="0.55" fill="#555"/><circle cx="794.2" cy="21.2" r="0.55" fill="#555"/><circle cx="794.2" cy="23.4" r="0.55" fill="#555"/></svg>
<div class="t" id="tabt" style="left:43px;top:5.6px;font-size:5.6px;letter-spacing:-0.16px;color:#2c2c2c">Prysm Mobile</div>
<div class="t" id="nick" style="left:771px;top:3.8px;font-size:5.5px;letter-spacing:-0.09px;color:#2a2a2a">Nick Prysm</div>
<div class="t" id="sec" style="left:46.8px;top:18.9px;font-size:6.1px;letter-spacing:-0.3px;color:#2e8b3d">Secure</div>
<div class="t" id="url" style="left:71.8px;top:18.6px;font-size:6.25px;color:#8a8a8a"><span style="color:#2e8b3d">https</span>://<span style="color:#222">html-qa2.synthesize.com</span>/#/workspace</div>
</div></body></html>
